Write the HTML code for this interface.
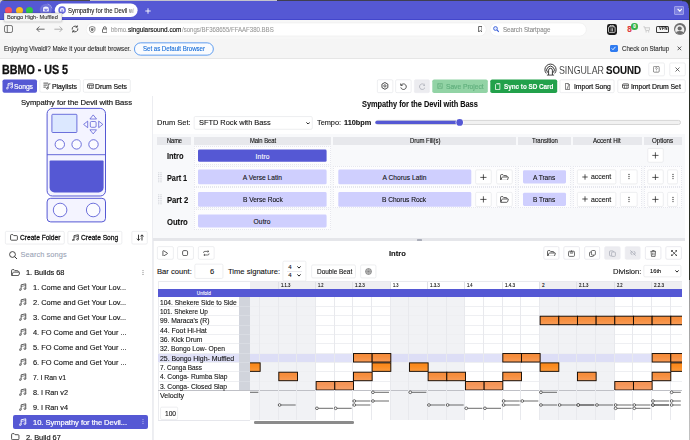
<!DOCTYPE html>
<html lang="en">
<head>
<meta charset="utf-8">
<title>Sympathy for the Devil with Bass</title>
<style>
html,body{margin:0;padding:0;}
body{width:690px;height:440px;overflow:hidden;position:relative;background:#fff;font-family:"Liberation Sans", sans-serif;}
.b{position:absolute;box-sizing:border-box;display:block;}
.t{position:absolute;white-space:pre;margin:0;padding:0;-webkit-text-stroke:0.1px;}

</style>
</head>
<body>
<header aria-label="App header">
<span class="t" style="left:2.20px;top:63.46px;font-size:11.9px;line-height:14.88px;letter-spacing:-0.040px;color:#111;font-weight:700;transform:scaleX(0.9048);transform-origin:0 50%;-webkit-text-stroke:0.3px #111;">BBMO - US 5</span>
<svg class="b" style="left:1px;top:78px" width="37" height="16"><rect x="1.50" y="1.40" width="34.50" height="13.30" rx="1.8" fill="#5558d4"/></svg>
<svg class="b" style="left:6.20px;top:82.20px;" width="7.2" height="7.65" viewBox="0 0 6.4 6.8"><path d="M1.8 5.5V1.5L5.7 0.7V4.7" fill="none" stroke="#fff" stroke-width="0.75" stroke-linejoin="round"/><path d="M1.8 2.9L5.7 2.1" fill="none" stroke="#fff" stroke-width="0.55"/><ellipse cx="1.05" cy="5.6" rx="0.8" ry="0.7" fill="none" stroke="#fff" stroke-width="0.65"/><ellipse cx="4.95" cy="4.8" rx="0.8" ry="0.7" fill="none" stroke="#fff" stroke-width="0.65"/></svg>
<span class="t" style="left:14.40px;top:81.65px;font-size:7.6px;line-height:9.5px;letter-spacing:-0.040px;color:#fff;transform:scaleX(0.8884);transform-origin:0 50%;-webkit-text-stroke:0.2px #fff;">Songs</span>
<svg class="b" style="left:38px;top:78px" width="44" height="16"><rect x="1.85" y="1.65" width="40.40" height="12.60" rx="1.25" fill="#fff" stroke="#e5e6ea" stroke-width="0.7"/></svg>
<svg class="b" style="left:43.20px;top:82.40px;" width="7.8" height="7.8" viewBox="0 0 7 7"><path d="M0.4 1H4.6M0.4 2.8H3.6M0.4 4.6H2.6" stroke="#2a2a2a" stroke-width="0.7"/><path d="M4.6 5.6V2L6.6 1.6" fill="none" stroke="#2a2a2a" stroke-width="0.7"/><ellipse cx="3.9" cy="5.7" rx="0.8" ry="0.7" fill="none" stroke="#2a2a2a" stroke-width="0.6"/></svg>
<span class="t" style="left:51.60px;top:81.65px;font-size:7.6px;line-height:9.5px;letter-spacing:-0.040px;color:#111;transform:scaleX(0.9078);transform-origin:0 50%;-webkit-text-stroke:0.2px #111;">Playlists</span>
<svg class="b" style="left:82px;top:78px" width="50" height="16"><rect x="1.35" y="1.65" width="46.90" height="12.60" rx="1.25" fill="#fff" stroke="#e5e6ea" stroke-width="0.7"/></svg>
<svg class="b" style="left:86.80px;top:83.20px;" width="7.4" height="6.2" viewBox="0 0 7.4 6.2"><rect x="0.5" y="0.9" width="6.4" height="4.4" rx="1.1" fill="none" stroke="#2a2a2a" stroke-width="0.75"/><path d="M0.5 2.4H6.9M2.5 2.4V5.3M4.9 2.4V5.3" stroke="#2a2a2a" stroke-width="0.6"/></svg>
<span class="t" style="left:94.60px;top:81.65px;font-size:7.6px;line-height:9.5px;letter-spacing:-0.040px;color:#111;transform:scaleX(0.9000);transform-origin:0 50%;-webkit-text-stroke:0.2px #111;">Drum Sets</span>
<svg class="b" style="left:543.60px;top:63.20px;" width="13" height="13" viewBox="0 0 13 13"><path d="M2.3 10.4A5.6 5.6 0 1 1 10.7 10.4" fill="none" stroke="#222" stroke-width="0.9"/><path d="M3.7 9.6A3.8 3.8 0 1 1 9.3 9.6" fill="none" stroke="#222" stroke-width="0.9"/><path d="M4.6 12V7.2A1.9 1.9 0 0 1 8.4 7.2V12" fill="none" stroke="#222" stroke-width="0.9"/><path d="M2.9 12.1H10.1" stroke="#222" stroke-width="0.8"/></svg>
<span class="t" style="left:558.60px;top:65.03px;font-size:10.2px;line-height:12.75px;letter-spacing:-0.040px;color:#262626;transform:scaleX(0.8685);transform-origin:0 50%;-webkit-text-stroke:0.12px #fff;">SINGULAR</span>
<span class="t" style="left:606.40px;top:64.10px;font-size:10.4px;line-height:13.0px;letter-spacing:-0.040px;color:#111;font-weight:700;transform:scaleX(0.9365);transform-origin:0 50%;">SOUND</span>
<svg class="b" style="left:647px;top:61px" width="19" height="17"><rect x="1.75" y="1.95" width="15.70" height="12.90" rx="1.25" fill="#fff" stroke="#e5e6ea" stroke-width="0.7"/></svg>
<svg class="b" style="left:653.40px;top:66.20px;" width="6.6" height="6.6" viewBox="0 0 6.6 6.6"><rect x="0.4" y="0.4" width="5.8" height="5.8" rx="1" fill="none" stroke="#444" stroke-width="0.6"/><path d="M2.4 2.5a0.9 0.9 0 1 1 1.3 0.8c-0.3 0.2-0.4 0.3-0.4 0.7" fill="none" stroke="#444" stroke-width="0.6"/><circle cx="3.3" cy="4.9" r="0.35" fill="#444"/></svg>
<svg class="b" style="left:668px;top:61px" width="19" height="17"><rect x="1.75" y="1.95" width="15.50" height="12.90" rx="1.25" fill="#fff" stroke="#e5e6ea" stroke-width="0.7"/></svg>
<svg class="b" style="left:675.00px;top:67.00px;" width="5" height="5" viewBox="0 0 5 5"><path d="M0.5 0.5L4.5 4.5M4.5 0.5L0.5 4.5" stroke="#333" stroke-width="0.7"/></svg>
<svg class="b" style="left:376px;top:78px" width="19" height="16"><rect x="1.35" y="1.75" width="15.50" height="12.90" rx="1.25" fill="#fff" stroke="#e5e6ea" stroke-width="0.7"/></svg>
<svg class="b" style="left:381.20px;top:82.40px;" width="7.8" height="7.8" viewBox="0 0 7.8 7.8"><path d="M3.9 0.5L6.85 2.2V5.6L3.9 7.3L0.95 5.6V2.2Z" fill="none" stroke="#222" stroke-width="0.8" stroke-linejoin="round"/><circle cx="3.9" cy="3.9" r="1.15" fill="none" stroke="#222" stroke-width="0.7"/></svg>
<svg class="b" style="left:394px;top:78px" width="19" height="16"><rect x="1.65" y="1.75" width="15.50" height="12.90" rx="1.25" fill="#fff" stroke="#e5e6ea" stroke-width="0.7"/></svg>
<svg class="b" style="left:400.00px;top:83.00px;" width="6.8" height="6.8" viewBox="0 0 6.8 6.8"><path d="M1.2 2.1A2.8 2.8 0 1 1 0.8 4.4" fill="none" stroke="#222" stroke-width="0.75"/><path d="M0.7 0.5V2.4H2.6" fill="none" stroke="#222" stroke-width="0.75"/></svg>
<svg class="b" style="left:413px;top:78px" width="18" height="16"><rect x="1.35" y="1.75" width="15.10" height="12.90" rx="1.25" fill="#ececf0" stroke="#ececf0" stroke-width="0.7"/></svg>
<svg class="b" style="left:418.50px;top:83.00px;" width="6.8" height="6.8" viewBox="0 0 6.8 6.8"><path d="M5.6 2.1A2.8 2.8 0 1 0 6 4.4" fill="none" stroke="#a8aab4" stroke-width="0.75"/><path d="M6.1 0.5V2.4H4.2" fill="none" stroke="#a8aab4" stroke-width="0.75"/></svg>
<svg class="b" style="left:431px;top:78px" width="58" height="16"><rect x="1.30" y="1.40" width="55.50" height="13.60" rx="1.8" fill="#92d3a5"/></svg>
<svg class="b" style="left:436.80px;top:83.40px;" width="6" height="6" viewBox="0 0 6 6"><rect x="0.4" y="0.4" width="5.2" height="5.2" rx="0.8" fill="none" stroke="#66b07f" stroke-width="0.65"/><path d="M1.6 0.4V2.2H4V0.4M1.6 5.6V3.6H4.4V5.6" fill="none" stroke="#66b07f" stroke-width="0.6"/></svg>
<span class="t" style="left:446.00px;top:81.97px;font-size:7.4px;line-height:9.25px;letter-spacing:-0.040px;color:#62b07e;transform:scaleX(0.9068);transform-origin:0 50%;-webkit-text-stroke:0.2px #62b07e;">Save Project</span>
<svg class="b" style="left:489px;top:78px" width="70" height="16"><rect x="1.30" y="1.40" width="66.90" height="13.60" rx="1.8" fill="#22a14b"/></svg>
<svg class="b" style="left:495.40px;top:83.10px;" width="5.4" height="7.0" viewBox="0 0 4.8 6.4"><path d="M1.5 0.4H4.4V6H0.4V1.5Z" fill="none" stroke="#fff" stroke-width="0.7"/><path d="M2 0.6V1.8M3 0.6V1.8" stroke="#fff" stroke-width="0.4"/></svg>
<span class="t" style="left:504.00px;top:81.97px;font-size:7.4px;line-height:9.25px;letter-spacing:-0.040px;color:#fff;font-weight:700;transform:scaleX(0.8614);transform-origin:0 50%;">Sync to SD Card</span>
<svg class="b" style="left:558px;top:78px" width="58" height="16"><rect x="1.95" y="1.75" width="54.10" height="12.90" rx="1.25" fill="#fff" stroke="#e5e6ea" stroke-width="0.7"/></svg>
<svg class="b" style="left:564.80px;top:83.00px;" width="5.2" height="6.8" viewBox="0 0 5.2 6.8"><path d="M0.4 0.4H3.2L4.8 2V6.4H0.4Z" fill="none" stroke="#333" stroke-width="0.65"/><path d="M3.2 0.4V2H4.8" fill="none" stroke="#333" stroke-width="0.5"/><path d="M2.9 5V3L4 2.8" fill="none" stroke="#333" stroke-width="0.5"/><circle cx="2.4" cy="5" r="0.55" fill="#333"/></svg>
<span class="t" style="left:574.00px;top:81.97px;font-size:7.4px;line-height:9.25px;letter-spacing:-0.040px;color:#111;transform:scaleX(0.9231);transform-origin:0 50%;-webkit-text-stroke:0.2px #111;">Import Song</span>
<svg class="b" style="left:616px;top:78px" width="71" height="16"><rect x="1.75" y="1.75" width="67.50" height="12.90" rx="1.25" fill="#fff" stroke="#e5e6ea" stroke-width="0.7"/></svg>
<svg class="b" style="left:621.60px;top:83.30px;" width="7.4" height="6.2" viewBox="0 0 7.4 6.2"><rect x="0.5" y="0.9" width="6.4" height="4.4" rx="1.1" fill="none" stroke="#2a2a2a" stroke-width="0.75"/><path d="M0.5 2.4H6.9M2.5 2.4V5.3M4.9 2.4V5.3" stroke="#2a2a2a" stroke-width="0.6"/></svg>
<span class="t" style="left:631.40px;top:81.97px;font-size:7.4px;line-height:9.25px;letter-spacing:-0.040px;color:#111;transform:scaleX(0.9281);transform-origin:0 50%;-webkit-text-stroke:0.2px #111;">Import Drum Set</span>
</header>
<aside aria-label="Song library">
<div class="b" style="left:151.80px;top:96.00px;width:0.70px;height:344.00px;background:#ecedf1;"></div>
<span class="t" style="left:21.20px;top:98.29px;font-size:7.7px;line-height:9.62px;letter-spacing:-0.040px;color:#111;transform:scaleX(0.9988);transform-origin:0 50%;-webkit-text-stroke:0.16px #111;">Sympathy for the Devil with Bass</span>
<svg class="b" style="left:45.00px;top:106.00px;" width="64" height="118" viewBox="45 106 64 118"><rect x="47.1" y="108.4" width="58.4" height="87.6" rx="5.2" fill="#f4f4ff" stroke="#5558d4" stroke-width="1"/><path d="M47.1 154.7H105.5" stroke="#5558d4" stroke-width="0.9"/><rect x="51.9" y="114.3" width="25" height="18.2" rx="0.8" fill="#dce8ff" stroke="#5558d4" stroke-width="0.85"/><path d="M93.2 114.9L96.5 119H89.9Z M93.2 133.9L96.5 129.8H89.9Z M83.6 124.4L87.7 121.1V127.7Z M102.8 124.4L98.7 121.1V127.7Z" fill="#f4f4ff" stroke="#5558d4" stroke-width="0.75" stroke-linejoin="round"/><rect x="90.3" y="121.5" width="5.8" height="5.8" rx="1.2" fill="#f4f4ff" stroke="#5558d4" stroke-width="0.75"/><circle cx="59.8" cy="144.4" r="4.7" fill="#fbfbff" stroke="#5558d4" stroke-width="0.85"/><circle cx="76.6" cy="144.4" r="4.7" fill="#fbfbff" stroke="#5558d4" stroke-width="0.85"/><circle cx="93.5" cy="144.4" r="4.7" fill="#fbfbff" stroke="#5558d4" stroke-width="0.85"/><path d="M49.6 161.6a1 1 0 0 1 1-1H102.6a1 1 0 0 1 1 1V187.4a5 5 0 0 1-5 5H54.6a5 5 0 0 1-5-5Z" fill="#5558d4"/><rect x="47.1" y="198.3" width="58.4" height="23.6" rx="3.6" fill="#f4f4ff" stroke="#5558d4" stroke-width="1"/><circle cx="60.1" cy="210" r="6.8" fill="#fbfbff" stroke="#5558d4" stroke-width="0.85"/><circle cx="93.2" cy="210" r="6.8" fill="#fbfbff" stroke="#5558d4" stroke-width="0.85"/></svg>
<svg class="b" style="left:4px;top:230px" width="62" height="16"><rect x="1.35" y="1.35" width="58.90" height="12.70" rx="1.25" fill="#fff" stroke="#e5e6ea" stroke-width="0.7"/></svg>
<svg class="b" style="left:9.80px;top:234.20px;" width="8" height="6.8" viewBox="0 0 8 6.8"><path d="M0.55 1.4Q0.55 0.6 1.35 0.6H2.9L3.8 1.6H6.6Q7.4 1.6 7.4 2.4V5.4Q7.4 6.2 6.6 6.2H1.35Q0.55 6.2 0.55 5.4Z" fill="none" stroke="#2a2a2a" stroke-width="0.8" stroke-linejoin="round"/></svg>
<span class="t" style="left:20.20px;top:233.38px;font-size:7.4px;line-height:9.25px;letter-spacing:-0.040px;color:#111;transform:scaleX(0.9037);transform-origin:0 50%;-webkit-text-stroke:0.28px #111;">Create Folder</span>
<svg class="b" style="left:66px;top:230px" width="58" height="16"><rect x="1.85" y="1.35" width="54.00" height="12.70" rx="1.25" fill="#fff" stroke="#e5e6ea" stroke-width="0.7"/></svg>
<svg class="b" style="left:72.00px;top:233.80px;" width="7.1" height="7.55" viewBox="0 0 6.4 6.8"><path d="M1.8 5.5V1.5L5.7 0.7V4.7" fill="none" stroke="#2a2a2a" stroke-width="0.75" stroke-linejoin="round"/><path d="M1.8 2.9L5.7 2.1" fill="none" stroke="#2a2a2a" stroke-width="0.55"/><ellipse cx="1.05" cy="5.6" rx="0.8" ry="0.7" fill="none" stroke="#2a2a2a" stroke-width="0.65"/><ellipse cx="4.95" cy="4.8" rx="0.8" ry="0.7" fill="none" stroke="#2a2a2a" stroke-width="0.65"/></svg>
<span class="t" style="left:81.00px;top:233.38px;font-size:7.4px;line-height:9.25px;letter-spacing:-0.040px;color:#111;transform:scaleX(0.9051);transform-origin:0 50%;-webkit-text-stroke:0.28px #111;">Create Song</span>
<svg class="b" style="left:130px;top:230px" width="19" height="16"><rect x="1.85" y="1.35" width="15.40" height="12.70" rx="1.25" fill="#fff" stroke="#e5e6ea" stroke-width="0.7"/></svg>
<svg class="b" style="left:136.00px;top:234.10px;" width="8.4" height="7.2" viewBox="0 0 8.4 7.2"><path d="M2.5 0.7V6.2M0.9 4.7L2.5 6.4L4.1 4.7" fill="none" stroke="#222" stroke-width="0.9"/><path d="M6 6.5V1M4.4 2.5L6 0.8L7.6 2.5" fill="none" stroke="#222" stroke-width="0.9"/></svg>
<svg class="b" style="left:8.60px;top:250.60px;" width="8.6" height="8.6" viewBox="0 0 8.6 8.6"><circle cx="3.5" cy="3.5" r="2.9" fill="none" stroke="#333" stroke-width="0.9"/><path d="M5.6 5.6L8 8" stroke="#333" stroke-width="1"/></svg>
<span class="t" style="left:20.60px;top:250.47px;font-size:7.4px;line-height:9.25px;letter-spacing:0.072px;color:#9aa3b5;">Search songs</span>
<svg class="b" style="left:10.80px;top:268.90px;" width="9.2" height="7.1" viewBox="0 0 8.8 6.8"><path d="M0.8 6.3Q0.55 6.3 0.55 5.6V1.4Q0.55 0.6 1.35 0.6H2.9L3.8 1.6H6.2Q7 1.6 7 2.4V3" fill="none" stroke="#333" stroke-width="0.8" stroke-linejoin="round"/><path d="M0.8 6.3L1.9 3.5Q2.1 3 2.7 3H7.9Q8.6 3 8.35 3.6L7.5 5.8Q7.3 6.3 6.7 6.3Z" fill="none" stroke="#333" stroke-width="0.8" stroke-linejoin="round"/></svg>
<span class="t" style="left:26.00px;top:267.76px;font-size:7.9px;line-height:9.88px;letter-spacing:-0.040px;color:#111;transform:scaleX(0.9413);transform-origin:0 50%;-webkit-text-stroke:0.16px #111;">1. Builds 68</span>
<svg class="b" style="left:142.00px;top:268.90px;" width="2" height="7" viewBox="0 0 2 7"><circle cx="1" cy="1.6" r="0.6" fill="#888"/><circle cx="1" cy="3.5" r="0.6" fill="#888"/><circle cx="1" cy="5.4" r="0.6" fill="#888"/></svg>
<svg class="b" style="left:19.30px;top:283.25px;" width="7.6" height="8.1" viewBox="0 0 6.4 6.8"><path d="M1.8 5.5V1.5L5.7 0.7V4.7" fill="none" stroke="#4a4a4a" stroke-width="0.75" stroke-linejoin="round"/><path d="M1.8 2.9L5.7 2.1" fill="none" stroke="#4a4a4a" stroke-width="0.55"/><ellipse cx="1.05" cy="5.6" rx="0.8" ry="0.7" fill="none" stroke="#4a4a4a" stroke-width="0.65"/><ellipse cx="4.95" cy="4.8" rx="0.8" ry="0.7" fill="none" stroke="#4a4a4a" stroke-width="0.65"/></svg>
<span class="t" style="left:32.60px;top:282.84px;font-size:7.7px;line-height:9.62px;letter-spacing:-0.040px;color:#111;transform:scaleX(0.9749);transform-origin:0 50%;-webkit-text-stroke:0.12px #111;">1. Come and Get Your Lov...</span>
<svg class="b" style="left:19.30px;top:298.22px;" width="7.6" height="8.1" viewBox="0 0 6.4 6.8"><path d="M1.8 5.5V1.5L5.7 0.7V4.7" fill="none" stroke="#4a4a4a" stroke-width="0.75" stroke-linejoin="round"/><path d="M1.8 2.9L5.7 2.1" fill="none" stroke="#4a4a4a" stroke-width="0.55"/><ellipse cx="1.05" cy="5.6" rx="0.8" ry="0.7" fill="none" stroke="#4a4a4a" stroke-width="0.65"/><ellipse cx="4.95" cy="4.8" rx="0.8" ry="0.7" fill="none" stroke="#4a4a4a" stroke-width="0.65"/></svg>
<span class="t" style="left:32.60px;top:297.81px;font-size:7.7px;line-height:9.62px;letter-spacing:-0.040px;color:#111;transform:scaleX(0.9770);transform-origin:0 50%;-webkit-text-stroke:0.12px #111;">2. Come and Get Your Lov...</span>
<svg class="b" style="left:19.30px;top:313.19px;" width="7.6" height="8.1" viewBox="0 0 6.4 6.8"><path d="M1.8 5.5V1.5L5.7 0.7V4.7" fill="none" stroke="#4a4a4a" stroke-width="0.75" stroke-linejoin="round"/><path d="M1.8 2.9L5.7 2.1" fill="none" stroke="#4a4a4a" stroke-width="0.55"/><ellipse cx="1.05" cy="5.6" rx="0.8" ry="0.7" fill="none" stroke="#4a4a4a" stroke-width="0.65"/><ellipse cx="4.95" cy="4.8" rx="0.8" ry="0.7" fill="none" stroke="#4a4a4a" stroke-width="0.65"/></svg>
<span class="t" style="left:32.60px;top:312.78px;font-size:7.7px;line-height:9.62px;letter-spacing:-0.040px;color:#111;transform:scaleX(0.9770);transform-origin:0 50%;-webkit-text-stroke:0.12px #111;">3. Come and Get Your Lov...</span>
<svg class="b" style="left:19.30px;top:328.16px;" width="7.6" height="8.1" viewBox="0 0 6.4 6.8"><path d="M1.8 5.5V1.5L5.7 0.7V4.7" fill="none" stroke="#4a4a4a" stroke-width="0.75" stroke-linejoin="round"/><path d="M1.8 2.9L5.7 2.1" fill="none" stroke="#4a4a4a" stroke-width="0.55"/><ellipse cx="1.05" cy="5.6" rx="0.8" ry="0.7" fill="none" stroke="#4a4a4a" stroke-width="0.65"/><ellipse cx="4.95" cy="4.8" rx="0.8" ry="0.7" fill="none" stroke="#4a4a4a" stroke-width="0.65"/></svg>
<span class="t" style="left:32.60px;top:327.75px;font-size:7.7px;line-height:9.62px;letter-spacing:-0.040px;color:#111;transform:scaleX(0.9710);transform-origin:0 50%;-webkit-text-stroke:0.12px #111;">4. FO Come and Get Your ...</span>
<svg class="b" style="left:19.30px;top:343.13px;" width="7.6" height="8.1" viewBox="0 0 6.4 6.8"><path d="M1.8 5.5V1.5L5.7 0.7V4.7" fill="none" stroke="#4a4a4a" stroke-width="0.75" stroke-linejoin="round"/><path d="M1.8 2.9L5.7 2.1" fill="none" stroke="#4a4a4a" stroke-width="0.55"/><ellipse cx="1.05" cy="5.6" rx="0.8" ry="0.7" fill="none" stroke="#4a4a4a" stroke-width="0.65"/><ellipse cx="4.95" cy="4.8" rx="0.8" ry="0.7" fill="none" stroke="#4a4a4a" stroke-width="0.65"/></svg>
<span class="t" style="left:32.60px;top:342.72px;font-size:7.7px;line-height:9.62px;letter-spacing:-0.040px;color:#111;transform:scaleX(0.9710);transform-origin:0 50%;-webkit-text-stroke:0.12px #111;">5. FO Come and Get Your ...</span>
<svg class="b" style="left:19.30px;top:358.10px;" width="7.6" height="8.1" viewBox="0 0 6.4 6.8"><path d="M1.8 5.5V1.5L5.7 0.7V4.7" fill="none" stroke="#4a4a4a" stroke-width="0.75" stroke-linejoin="round"/><path d="M1.8 2.9L5.7 2.1" fill="none" stroke="#4a4a4a" stroke-width="0.55"/><ellipse cx="1.05" cy="5.6" rx="0.8" ry="0.7" fill="none" stroke="#4a4a4a" stroke-width="0.65"/><ellipse cx="4.95" cy="4.8" rx="0.8" ry="0.7" fill="none" stroke="#4a4a4a" stroke-width="0.65"/></svg>
<span class="t" style="left:32.60px;top:357.69px;font-size:7.7px;line-height:9.62px;letter-spacing:-0.040px;color:#111;transform:scaleX(0.9710);transform-origin:0 50%;-webkit-text-stroke:0.12px #111;">6. FO Come and Get Your ...</span>
<svg class="b" style="left:19.30px;top:373.07px;" width="7.6" height="8.1" viewBox="0 0 6.4 6.8"><path d="M1.8 5.5V1.5L5.7 0.7V4.7" fill="none" stroke="#4a4a4a" stroke-width="0.75" stroke-linejoin="round"/><path d="M1.8 2.9L5.7 2.1" fill="none" stroke="#4a4a4a" stroke-width="0.55"/><ellipse cx="1.05" cy="5.6" rx="0.8" ry="0.7" fill="none" stroke="#4a4a4a" stroke-width="0.65"/><ellipse cx="4.95" cy="4.8" rx="0.8" ry="0.7" fill="none" stroke="#4a4a4a" stroke-width="0.65"/></svg>
<span class="t" style="left:32.60px;top:372.66px;font-size:7.7px;line-height:9.62px;letter-spacing:-0.040px;color:#111;transform:scaleX(0.8970);transform-origin:0 50%;-webkit-text-stroke:0.12px #111;">7. I Ran v1</span>
<svg class="b" style="left:19.30px;top:388.04px;" width="7.6" height="8.1" viewBox="0 0 6.4 6.8"><path d="M1.8 5.5V1.5L5.7 0.7V4.7" fill="none" stroke="#4a4a4a" stroke-width="0.75" stroke-linejoin="round"/><path d="M1.8 2.9L5.7 2.1" fill="none" stroke="#4a4a4a" stroke-width="0.55"/><ellipse cx="1.05" cy="5.6" rx="0.8" ry="0.7" fill="none" stroke="#4a4a4a" stroke-width="0.65"/><ellipse cx="4.95" cy="4.8" rx="0.8" ry="0.7" fill="none" stroke="#4a4a4a" stroke-width="0.65"/></svg>
<span class="t" style="left:32.60px;top:387.63px;font-size:7.7px;line-height:9.62px;letter-spacing:-0.040px;color:#111;transform:scaleX(0.9514);transform-origin:0 50%;-webkit-text-stroke:0.12px #111;">8. I Ran v2</span>
<svg class="b" style="left:19.30px;top:403.01px;" width="7.6" height="8.1" viewBox="0 0 6.4 6.8"><path d="M1.8 5.5V1.5L5.7 0.7V4.7" fill="none" stroke="#4a4a4a" stroke-width="0.75" stroke-linejoin="round"/><path d="M1.8 2.9L5.7 2.1" fill="none" stroke="#4a4a4a" stroke-width="0.55"/><ellipse cx="1.05" cy="5.6" rx="0.8" ry="0.7" fill="none" stroke="#4a4a4a" stroke-width="0.65"/><ellipse cx="4.95" cy="4.8" rx="0.8" ry="0.7" fill="none" stroke="#4a4a4a" stroke-width="0.65"/></svg>
<span class="t" style="left:32.60px;top:402.60px;font-size:7.7px;line-height:9.62px;letter-spacing:-0.040px;color:#111;transform:scaleX(0.9514);transform-origin:0 50%;-webkit-text-stroke:0.12px #111;">9. I Ran v4</span>
<div class="b" style="left:13.00px;top:414.58px;width:134.60px;height:14.60px;background:#5558d4;border-radius:2px;"></div>
<svg class="b" style="left:142.00px;top:418.38px;" width="2" height="7" viewBox="0 0 2 7"><circle cx="1" cy="1.6" r="0.6" fill="#b4b6ee"/><circle cx="1" cy="3.5" r="0.6" fill="#b4b6ee"/><circle cx="1" cy="5.4" r="0.6" fill="#b4b6ee"/></svg>
<svg class="b" style="left:19.30px;top:417.98px;" width="7.6" height="8.1" viewBox="0 0 6.4 6.8"><path d="M1.8 5.5V1.5L5.7 0.7V4.7" fill="none" stroke="#fff" stroke-width="0.75" stroke-linejoin="round"/><path d="M1.8 2.9L5.7 2.1" fill="none" stroke="#fff" stroke-width="0.55"/><ellipse cx="1.05" cy="5.6" rx="0.8" ry="0.7" fill="none" stroke="#fff" stroke-width="0.65"/><ellipse cx="4.95" cy="4.8" rx="0.8" ry="0.7" fill="none" stroke="#fff" stroke-width="0.65"/></svg>
<span class="t" style="left:32.60px;top:417.57px;font-size:7.7px;line-height:9.62px;letter-spacing:-0.040px;color:#fff;transform:scaleX(0.9847);transform-origin:0 50%;-webkit-text-stroke:0.2px #fff;">10. Sympathy for the Devil...</span>
<svg class="b" style="left:11.00px;top:433.40px;" width="8.6" height="7.3" viewBox="0 0 8 6.8"><path d="M0.55 1.4Q0.55 0.6 1.35 0.6H2.9L3.8 1.6H6.6Q7.4 1.6 7.4 2.4V5.4Q7.4 6.2 6.6 6.2H1.35Q0.55 6.2 0.55 5.4Z" fill="none" stroke="#333" stroke-width="0.8" stroke-linejoin="round"/></svg>
<span class="t" style="left:26.00px;top:432.66px;font-size:7.9px;line-height:9.88px;letter-spacing:-0.040px;color:#111;transform:scaleX(0.9432);transform-origin:0 50%;-webkit-text-stroke:0.16px #111;">2. Build 67</span>
</aside>
<section aria-label="Song parts">
<span class="t" style="left:361.60px;top:99.31px;font-size:8.3px;line-height:10.38px;letter-spacing:-0.040px;color:#111;font-weight:700;transform:scaleX(0.8927);transform-origin:0 50%;">Sympathy for the Devil with Bass</span>
<span class="t" style="left:157.00px;top:118.45px;font-size:7.6px;line-height:9.5px;letter-spacing:-0.040px;color:#111;transform:scaleX(0.9921);transform-origin:0 50%;">Drum Set:</span>
<svg class="b" style="left:192px;top:115px" width="122" height="16"><rect x="2.15" y="1.55" width="118.10" height="12.70" rx="1.25" fill="#fff" stroke="#e5e6ea" stroke-width="0.7"/></svg>
<span class="t" style="left:199.30px;top:118.45px;font-size:7.6px;line-height:9.5px;letter-spacing:-0.040px;color:#111;transform:scaleX(0.9805);transform-origin:0 50%;">SFTD Rock with Bass</span>
<svg class="b" style="left:305.90px;top:121.60px;" width="4.2" height="2.6" viewBox="0 0 4.2 2.6"><path d="M0.4 0.4L2.1 2.1L3.8000000000000003 0.4" fill="none" stroke="#222" stroke-width="1"/></svg>
<span class="t" style="left:316.80px;top:118.45px;font-size:7.6px;line-height:9.5px;letter-spacing:-0.040px;color:#111;transform:scaleX(0.9714);transform-origin:0 50%;">Tempo:</span>
<span class="t" style="left:343.80px;top:118.45px;font-size:7.6px;line-height:9.5px;letter-spacing:-0.040px;color:#111;font-weight:700;transform:scaleX(0.9686);transform-origin:0 50%;">110bpm</span>
<svg class="b" style="left:374px;top:118px" width="308" height="8"><rect x="1.80" y="2.40" width="304.70" height="4.10" rx="2.00" fill="#f1f1f1" stroke="#d6d6d6" stroke-width="1"/></svg>
<svg class="b" style="left:374px;top:119px" width="87" height="7"><rect x="1.30" y="1.70" width="84.70" height="3.40" rx="1.7" fill="#5558d4"/></svg>
<svg class="b" style="left:454px;top:117px" width="11" height="11"><rect x="1.60" y="1.40" width="8.00" height="8.00" rx="4" fill="#fff"/></svg>
<svg class="b" style="left:455px;top:118px" width="9" height="9"><rect x="1.30" y="1.10" width="6.70" height="6.70" rx="3.4" fill="#5558d4"/></svg>
<div class="b" style="left:153.20px;top:133.60px;width:531.40px;height:104.40px;background:#f8f9fb;"></div>
<div class="b" style="left:157.00px;top:137.40px;width:34.30px;height:7.20px;background:#e7e8ec;"></div>
<span class="t" style="left:166.80px;top:137.24px;font-size:6.5px;line-height:8.12px;letter-spacing:-0.040px;color:#111;transform:scaleX(0.8709);transform-origin:0 50%;-webkit-text-stroke:0.12px #111;">Name</span>
<div class="b" style="left:193.80px;top:137.40px;width:137.70px;height:7.20px;background:#e7e8ec;"></div>
<span class="t" style="left:249.50px;top:137.24px;font-size:6.5px;line-height:8.12px;letter-spacing:-0.040px;color:#111;transform:scaleX(0.9012);transform-origin:0 50%;-webkit-text-stroke:0.12px #111;">Main Beat</span>
<div class="b" style="left:333.30px;top:137.40px;width:182.90px;height:7.20px;background:#e7e8ec;"></div>
<span class="t" style="left:409.60px;top:137.24px;font-size:6.5px;line-height:8.12px;letter-spacing:-0.040px;color:#111;transform:scaleX(0.9174);transform-origin:0 50%;-webkit-text-stroke:0.12px #111;">Drum Fill(s)</span>
<div class="b" style="left:518.40px;top:137.40px;width:52.30px;height:7.20px;background:#e7e8ec;"></div>
<span class="t" style="left:531.80px;top:137.24px;font-size:6.5px;line-height:8.12px;letter-spacing:-0.040px;color:#111;transform:scaleX(0.9230);transform-origin:0 50%;-webkit-text-stroke:0.12px #111;">Transition</span>
<div class="b" style="left:573.00px;top:137.40px;width:68.70px;height:7.20px;background:#e7e8ec;"></div>
<span class="t" style="left:593.40px;top:137.24px;font-size:6.5px;line-height:8.12px;letter-spacing:-0.040px;color:#111;transform:scaleX(0.9431);transform-origin:0 50%;-webkit-text-stroke:0.12px #111;">Accent Hit</span>
<div class="b" style="left:644.00px;top:137.40px;width:37.50px;height:7.20px;background:#e7e8ec;"></div>
<span class="t" style="left:652.00px;top:137.24px;font-size:6.5px;line-height:8.12px;letter-spacing:-0.040px;color:#111;transform:scaleX(0.9474);transform-origin:0 50%;-webkit-text-stroke:0.12px #111;">Options</span>
<div class="b" style="left:193.80px;top:145.70px;width:137.70px;height:19.50px;background:#fdfdfe;border:0.6px dotted #e6e7ee;"></div>
<span class="t" style="left:166.80px;top:151.40px;font-size:8.4px;line-height:10.5px;letter-spacing:-0.040px;color:#111;font-weight:700;transform:scaleX(0.8943);transform-origin:0 50%;">Intro</span>
<svg class="b" style="left:197px;top:148px" width="131" height="15"><rect x="1.00" y="1.50" width="128.60" height="12.30" rx="1.4" fill="#5558d4"/></svg>
<span class="t" style="left:255.60px;top:152.56px;font-size:6.7px;line-height:8.38px;letter-spacing:0.152px;color:#fff;-webkit-text-stroke:0.1px #fff;">Intro</span>
<svg class="b" style="left:646px;top:147px" width="19" height="17"><rect x="1.75" y="1.45" width="15.50" height="13.80" rx="1.25" fill="#fff" stroke="#e5e6ea" stroke-width="0.7"/></svg>
<svg class="b" style="left:652.10px;top:152.00px;" width="6.8" height="6.8" viewBox="0 0 6.8 6.8"><path d="M3.4 0.3V6.5M0.3 3.4H6.5" stroke="#222" stroke-width="0.75"/></svg>
<div class="b" style="left:193.80px;top:165.60px;width:137.70px;height:21.20px;background:#fdfdfe;border:0.6px dotted #e6e7ee;"></div>
<div class="b" style="left:333.30px;top:165.60px;width:182.90px;height:21.20px;background:#fdfdfe;border:0.6px dotted #e6e7ee;"></div>
<div class="b" style="left:518.40px;top:165.60px;width:52.30px;height:21.20px;background:#fdfdfe;border:0.6px dotted #e6e7ee;"></div>
<div class="b" style="left:573.00px;top:165.60px;width:68.70px;height:21.20px;background:#fdfdfe;border:0.6px dotted #e6e7ee;"></div>
<div class="b" style="left:644.00px;top:165.60px;width:37.50px;height:21.20px;background:#fdfdfe;border:0.6px dotted #e6e7ee;"></div>
<svg class="b" style="left:158.20px;top:171.50px;" width="4" height="11" viewBox="0 0 4 11"><circle cx="0.8" cy="0.8" r="0.55" fill="#c3c5cd"/><circle cx="0.8" cy="2.6" r="0.55" fill="#c3c5cd"/><circle cx="0.8" cy="4.4" r="0.55" fill="#c3c5cd"/><circle cx="0.8" cy="6.2" r="0.55" fill="#c3c5cd"/><circle cx="0.8" cy="8.0" r="0.55" fill="#c3c5cd"/><circle cx="0.8" cy="9.8" r="0.55" fill="#c3c5cd"/><circle cx="3" cy="0.8" r="0.55" fill="#c3c5cd"/><circle cx="3" cy="2.6" r="0.55" fill="#c3c5cd"/><circle cx="3" cy="4.4" r="0.55" fill="#c3c5cd"/><circle cx="3" cy="6.2" r="0.55" fill="#c3c5cd"/><circle cx="3" cy="8.0" r="0.55" fill="#c3c5cd"/><circle cx="3" cy="9.8" r="0.55" fill="#c3c5cd"/></svg>
<span class="t" style="left:166.80px;top:172.65px;font-size:8.4px;line-height:10.5px;letter-spacing:-0.040px;color:#111;font-weight:700;transform:scaleX(0.8752);transform-origin:0 50%;">Part 1</span>
<svg class="b" style="left:197px;top:168px" width="131" height="18"><rect x="1.00" y="1.50" width="128.60" height="14.80" rx="1.4" fill="#cfcffe"/></svg>
<span class="t" style="left:242.80px;top:173.81px;font-size:6.7px;line-height:8.38px;letter-spacing:-0.018px;color:#111;-webkit-text-stroke:0.1px #111;">A Verse Latin</span>
<svg class="b" style="left:337px;top:168px" width="136" height="18"><rect x="1.30" y="1.50" width="133.00" height="14.80" rx="1.4" fill="#cfcffe"/></svg>
<span class="t" style="left:382.40px;top:173.81px;font-size:6.7px;line-height:8.38px;letter-spacing:0.025px;color:#111;-webkit-text-stroke:0.1px #111;">A Chorus Latin</span>
<svg class="b" style="left:474px;top:168px" width="19" height="18"><rect x="1.65" y="1.85" width="15.60" height="14.10" rx="1.25" fill="#fff" stroke="#e5e6ea" stroke-width="0.7"/></svg>
<svg class="b" style="left:480.10px;top:173.50px;" width="6.8" height="6.8" viewBox="0 0 6.8 6.8"><path d="M3.4 0.3V6.5M0.3 3.4H6.5" stroke="#222" stroke-width="0.75"/></svg>
<svg class="b" style="left:495px;top:168px" width="19" height="18"><rect x="1.65" y="1.85" width="15.60" height="14.10" rx="1.25" fill="#fff" stroke="#e5e6ea" stroke-width="0.7"/></svg>
<svg class="b" style="left:500.20px;top:173.70px;" width="8.8" height="6.8" viewBox="0 0 8.8 6.8"><path d="M0.8 6.3Q0.55 6.3 0.55 5.6V1.4Q0.55 0.6 1.35 0.6H2.9L3.8 1.6H6.2Q7 1.6 7 2.4V3" fill="none" stroke="#333" stroke-width="0.8" stroke-linejoin="round"/><path d="M0.8 6.3L1.9 3.5Q2.1 3 2.7 3H7.9Q8.6 3 8.35 3.6L7.5 5.8Q7.3 6.3 6.7 6.3Z" fill="none" stroke="#333" stroke-width="0.8" stroke-linejoin="round"/></svg>
<svg class="b" style="left:522px;top:169px" width="45" height="16"><rect x="1.00" y="1.30" width="43.00" height="13.20" rx="1.4" fill="#cfcffe"/></svg>
<span class="t" style="left:533.40px;top:173.69px;font-size:6.9px;line-height:8.62px;letter-spacing:-0.040px;color:#111;transform:scaleX(0.9596);transform-origin:0 50%;-webkit-text-stroke:0.1px #111;">A Trans</span>
<svg class="b" style="left:576px;top:168px" width="42" height="18"><rect x="1.35" y="1.85" width="38.50" height="14.10" rx="1.25" fill="#fff" stroke="#e5e6ea" stroke-width="0.7"/></svg>
<svg class="b" style="left:582.00px;top:173.90px;" width="6" height="6" viewBox="0 0 6 6"><path d="M3.0 0.3V5.7M0.3 3.0H5.7" stroke="#222" stroke-width="0.75"/></svg>
<span class="t" style="left:591.20px;top:173.36px;font-size:7.1px;line-height:8.88px;letter-spacing:-0.040px;color:#111;transform:scaleX(0.9756);transform-origin:0 50%;-webkit-text-stroke:0.1px #111;">accent</span>
<svg class="b" style="left:619px;top:168px" width="20" height="18"><rect x="1.35" y="1.85" width="16.80" height="14.10" rx="1.25" fill="#fff" stroke="#e5e6ea" stroke-width="0.7"/></svg>
<svg class="b" style="left:627.70px;top:173.40px;" width="2" height="7" viewBox="0 0 2 7"><circle cx="1" cy="1.4" r="0.66" fill="#444"/><circle cx="1" cy="3.5" r="0.66" fill="#444"/><circle cx="1" cy="5.6" r="0.66" fill="#444"/></svg>
<svg class="b" style="left:646px;top:168px" width="19" height="18"><rect x="1.75" y="1.85" width="15.50" height="14.10" rx="1.25" fill="#fff" stroke="#e5e6ea" stroke-width="0.7"/></svg>
<svg class="b" style="left:652.10px;top:173.50px;" width="6.8" height="6.8" viewBox="0 0 6.8 6.8"><path d="M3.4 0.3V6.5M0.3 3.4H6.5" stroke="#222" stroke-width="0.75"/></svg>
<svg class="b" style="left:666px;top:168px" width="13" height="18"><rect x="1.65" y="1.85" width="9.80" height="14.10" rx="1.25" fill="#fff" stroke="#e5e6ea" stroke-width="0.7"/></svg>
<svg class="b" style="left:671.50px;top:173.00px;" width="2" height="7" viewBox="0 0 2 7"><circle cx="1" cy="1.4" r="0.66" fill="#444"/><circle cx="1" cy="3.5" r="0.66" fill="#444"/><circle cx="1" cy="5.6" r="0.66" fill="#444"/></svg>
<div class="b" style="left:193.80px;top:187.20px;width:137.70px;height:21.20px;background:#fdfdfe;border:0.6px dotted #e6e7ee;"></div>
<div class="b" style="left:333.30px;top:187.20px;width:182.90px;height:21.20px;background:#fdfdfe;border:0.6px dotted #e6e7ee;"></div>
<div class="b" style="left:518.40px;top:187.20px;width:52.30px;height:21.20px;background:#fdfdfe;border:0.6px dotted #e6e7ee;"></div>
<div class="b" style="left:573.00px;top:187.20px;width:68.70px;height:21.20px;background:#fdfdfe;border:0.6px dotted #e6e7ee;"></div>
<div class="b" style="left:644.00px;top:187.20px;width:37.50px;height:21.20px;background:#fdfdfe;border:0.6px dotted #e6e7ee;"></div>
<svg class="b" style="left:158.20px;top:194.00px;" width="4" height="11" viewBox="0 0 4 11"><circle cx="0.8" cy="0.8" r="0.55" fill="#c3c5cd"/><circle cx="0.8" cy="2.6" r="0.55" fill="#c3c5cd"/><circle cx="0.8" cy="4.4" r="0.55" fill="#c3c5cd"/><circle cx="0.8" cy="6.2" r="0.55" fill="#c3c5cd"/><circle cx="0.8" cy="8.0" r="0.55" fill="#c3c5cd"/><circle cx="0.8" cy="9.8" r="0.55" fill="#c3c5cd"/><circle cx="3" cy="0.8" r="0.55" fill="#c3c5cd"/><circle cx="3" cy="2.6" r="0.55" fill="#c3c5cd"/><circle cx="3" cy="4.4" r="0.55" fill="#c3c5cd"/><circle cx="3" cy="6.2" r="0.55" fill="#c3c5cd"/><circle cx="3" cy="8.0" r="0.55" fill="#c3c5cd"/><circle cx="3" cy="9.8" r="0.55" fill="#c3c5cd"/></svg>
<span class="t" style="left:166.80px;top:195.15px;font-size:8.4px;line-height:10.5px;letter-spacing:-0.040px;color:#111;font-weight:700;transform:scaleX(0.9185);transform-origin:0 50%;">Part 2</span>
<svg class="b" style="left:197px;top:191px" width="131" height="17"><rect x="1.00" y="1.00" width="128.60" height="14.80" rx="1.4" fill="#cfcffe"/></svg>
<span class="t" style="left:242.80px;top:196.31px;font-size:6.7px;line-height:8.38px;letter-spacing:-0.040px;color:#111;transform:scaleX(0.9906);transform-origin:0 50%;-webkit-text-stroke:0.1px #111;">B Verse Rock</span>
<svg class="b" style="left:337px;top:191px" width="136" height="17"><rect x="1.30" y="1.00" width="133.00" height="14.80" rx="1.4" fill="#cfcffe"/></svg>
<span class="t" style="left:382.40px;top:196.31px;font-size:6.7px;line-height:8.38px;letter-spacing:-0.040px;color:#111;transform:scaleX(0.9932);transform-origin:0 50%;-webkit-text-stroke:0.1px #111;">B Chorus Rock</span>
<svg class="b" style="left:474px;top:191px" width="19" height="17"><rect x="1.65" y="1.35" width="15.60" height="14.10" rx="1.25" fill="#fff" stroke="#e5e6ea" stroke-width="0.7"/></svg>
<svg class="b" style="left:480.10px;top:196.00px;" width="6.8" height="6.8" viewBox="0 0 6.8 6.8"><path d="M3.4 0.3V6.5M0.3 3.4H6.5" stroke="#222" stroke-width="0.75"/></svg>
<svg class="b" style="left:495px;top:191px" width="19" height="17"><rect x="1.65" y="1.35" width="15.60" height="14.10" rx="1.25" fill="#fff" stroke="#e5e6ea" stroke-width="0.7"/></svg>
<svg class="b" style="left:500.20px;top:196.20px;" width="8.8" height="6.8" viewBox="0 0 8.8 6.8"><path d="M0.8 6.3Q0.55 6.3 0.55 5.6V1.4Q0.55 0.6 1.35 0.6H2.9L3.8 1.6H6.2Q7 1.6 7 2.4V3" fill="none" stroke="#333" stroke-width="0.8" stroke-linejoin="round"/><path d="M0.8 6.3L1.9 3.5Q2.1 3 2.7 3H7.9Q8.6 3 8.35 3.6L7.5 5.8Q7.3 6.3 6.7 6.3Z" fill="none" stroke="#333" stroke-width="0.8" stroke-linejoin="round"/></svg>
<svg class="b" style="left:522px;top:191px" width="45" height="16"><rect x="1.00" y="1.80" width="43.00" height="13.20" rx="1.4" fill="#cfcffe"/></svg>
<span class="t" style="left:533.40px;top:196.19px;font-size:6.9px;line-height:8.62px;letter-spacing:-0.040px;color:#111;transform:scaleX(0.9443);transform-origin:0 50%;-webkit-text-stroke:0.1px #111;">B Trans</span>
<svg class="b" style="left:576px;top:191px" width="42" height="17"><rect x="1.35" y="1.35" width="38.50" height="14.10" rx="1.25" fill="#fff" stroke="#e5e6ea" stroke-width="0.7"/></svg>
<svg class="b" style="left:582.00px;top:196.40px;" width="6" height="6" viewBox="0 0 6 6"><path d="M3.0 0.3V5.7M0.3 3.0H5.7" stroke="#222" stroke-width="0.75"/></svg>
<span class="t" style="left:591.20px;top:195.86px;font-size:7.1px;line-height:8.88px;letter-spacing:-0.040px;color:#111;transform:scaleX(0.9756);transform-origin:0 50%;-webkit-text-stroke:0.1px #111;">accent</span>
<svg class="b" style="left:619px;top:191px" width="20" height="17"><rect x="1.35" y="1.35" width="16.80" height="14.10" rx="1.25" fill="#fff" stroke="#e5e6ea" stroke-width="0.7"/></svg>
<svg class="b" style="left:627.70px;top:195.90px;" width="2" height="7" viewBox="0 0 2 7"><circle cx="1" cy="1.4" r="0.66" fill="#444"/><circle cx="1" cy="3.5" r="0.66" fill="#444"/><circle cx="1" cy="5.6" r="0.66" fill="#444"/></svg>
<svg class="b" style="left:646px;top:191px" width="19" height="17"><rect x="1.75" y="1.35" width="15.50" height="14.10" rx="1.25" fill="#fff" stroke="#e5e6ea" stroke-width="0.7"/></svg>
<svg class="b" style="left:652.10px;top:196.00px;" width="6.8" height="6.8" viewBox="0 0 6.8 6.8"><path d="M3.4 0.3V6.5M0.3 3.4H6.5" stroke="#222" stroke-width="0.75"/></svg>
<svg class="b" style="left:666px;top:191px" width="13" height="17"><rect x="1.65" y="1.35" width="9.80" height="14.10" rx="1.25" fill="#fff" stroke="#e5e6ea" stroke-width="0.7"/></svg>
<svg class="b" style="left:671.50px;top:195.50px;" width="2" height="7" viewBox="0 0 2 7"><circle cx="1" cy="1.4" r="0.66" fill="#444"/><circle cx="1" cy="3.5" r="0.66" fill="#444"/><circle cx="1" cy="5.6" r="0.66" fill="#444"/></svg>
<div class="b" style="left:193.80px;top:208.90px;width:137.70px;height:20.90px;background:#fdfdfe;border:0.6px dotted #e6e7ee;"></div>
<span class="t" style="left:166.80px;top:216.75px;font-size:8.4px;line-height:10.5px;letter-spacing:-0.040px;color:#111;font-weight:700;transform:scaleX(0.9189);transform-origin:0 50%;">Outro</span>
<svg class="b" style="left:197px;top:213px" width="131" height="16"><rect x="1.00" y="1.50" width="128.60" height="13.00" rx="1.4" fill="#cfcffe"/></svg>
<span class="t" style="left:253.60px;top:217.91px;font-size:6.7px;line-height:8.38px;letter-spacing:0.066px;color:#111;-webkit-text-stroke:0.1px #111;">Outro</span>
<div class="b" style="left:153.20px;top:238.00px;width:531.40px;height:3.40px;background:#e5e6ea;"></div>
<div class="b" style="left:417.20px;top:239.20px;width:4.60px;height:1.40px;background:#a9acb8;border-radius:0.6px;"></div>
</section>
<section aria-label="Beat editor">
<div class="b" style="left:153.00px;top:241.40px;width:0.70px;height:198.60px;background:#eeeff2;"></div>
<svg class="b" style="left:156px;top:245px" width="19" height="16"><rect x="1.35" y="1.65" width="16.00" height="12.60" rx="1.25" fill="#fff" stroke="#e5e6ea" stroke-width="0.7"/></svg>
<svg class="b" style="left:162.00px;top:249.60px;" width="6.4" height="6.8" viewBox="0 0 6.4 6.8"><path d="M0.9 1.2Q0.9 0.5 1.6 0.8L5.3 3Q5.8 3.4 5.3 3.8L1.6 6Q0.9 6.3 0.9 5.6Z" fill="none" stroke="#3a3a3a" stroke-width="0.8" stroke-linejoin="round"/></svg>
<svg class="b" style="left:176px;top:245px" width="19" height="16"><rect x="1.55" y="1.65" width="15.90" height="12.60" rx="1.25" fill="#fff" stroke="#e5e6ea" stroke-width="0.7"/></svg>
<svg class="b" style="left:182.40px;top:249.90px;" width="6.2" height="6.2" viewBox="0 0 6.2 6.2"><rect x="0.6" y="0.6" width="5" height="5" rx="1.3" fill="none" stroke="#3a3a3a" stroke-width="0.8"/></svg>
<svg class="b" style="left:197px;top:245px" width="19" height="16"><rect x="1.35" y="1.65" width="15.80" height="12.60" rx="1.25" fill="#fff" stroke="#e5e6ea" stroke-width="0.7"/></svg>
<svg class="b" style="left:203.00px;top:249.90px;" width="6.6" height="6.4" viewBox="0 0 6.6 6.4"><path d="M0.6 3V2.6a1.2 1.2 0 0 1 1.2-1.2H5.6M4.6 0.3L5.8 1.4L4.6 2.5" fill="none" stroke="#333" stroke-width="0.7"/><path d="M6 3.4V3.8a1.2 1.2 0 0 1-1.2 1.2H1M2 3.9L0.8 5L2 6.1" fill="none" stroke="#333" stroke-width="0.7"/></svg>
<span class="t" style="left:389.00px;top:248.70px;font-size:8px;line-height:10.0px;letter-spacing:-0.040px;color:#111;font-weight:700;transform:scaleX(0.9534);transform-origin:0 50%;">Intro</span>
<svg class="b" style="left:542px;top:245px" width="19" height="16"><rect x="1.85" y="1.65" width="15.10" height="12.60" rx="1.25" fill="#fff" stroke="#e2e3e8" stroke-width="0.7"/></svg>
<svg class="b" style="left:562px;top:245px" width="19" height="16"><rect x="1.85" y="1.65" width="15.60" height="12.60" rx="1.25" fill="#fff" stroke="#e2e3e8" stroke-width="0.7"/></svg>
<svg class="b" style="left:583px;top:245px" width="18" height="16"><rect x="1.65" y="1.65" width="15.00" height="12.60" rx="1.25" fill="#fff" stroke="#e2e3e8" stroke-width="0.7"/></svg>
<svg class="b" style="left:603px;top:245px" width="19" height="16"><rect x="1.65" y="1.65" width="15.50" height="12.60" rx="1.25" fill="#ececf0" stroke="#ececf0" stroke-width="0.7"/></svg>
<svg class="b" style="left:623px;top:245px" width="19" height="16"><rect x="2.15" y="1.65" width="15.00" height="12.60" rx="1.25" fill="#ececf0" stroke="#ececf0" stroke-width="0.7"/></svg>
<svg class="b" style="left:644px;top:245px" width="19" height="16"><rect x="1.35" y="1.65" width="15.60" height="12.60" rx="1.25" fill="#fff" stroke="#e2e3e8" stroke-width="0.7"/></svg>
<svg class="b" style="left:664px;top:245px" width="19" height="16"><rect x="1.85" y="1.65" width="15.60" height="12.60" rx="1.25" fill="#fff" stroke="#e2e3e8" stroke-width="0.7"/></svg>
<svg class="b" style="left:547.20px;top:249.70px;" width="8.8" height="6.8" viewBox="0 0 8.8 6.8"><path d="M0.8 6.3Q0.55 6.3 0.55 5.6V1.4Q0.55 0.6 1.35 0.6H2.9L3.8 1.6H6.2Q7 1.6 7 2.4V3" fill="none" stroke="#333" stroke-width="0.8" stroke-linejoin="round"/><path d="M0.8 6.3L1.9 3.5Q2.1 3 2.7 3H7.9Q8.6 3 8.35 3.6L7.5 5.8Q7.3 6.3 6.7 6.3Z" fill="none" stroke="#333" stroke-width="0.8" stroke-linejoin="round"/></svg>
<svg class="b" style="left:568.20px;top:249.60px;" width="7" height="7" viewBox="0 0 7 7"><rect x="0.5" y="1.2" width="6" height="5.2" rx="1" fill="none" stroke="#333" stroke-width="0.7"/><path d="M2.2 1.2V3.2H4.8V1.2M3.5 0.2V2.4" fill="none" stroke="#333" stroke-width="0.6"/></svg>
<svg class="b" style="left:588.80px;top:249.60px;" width="7" height="7" viewBox="0 0 7 7"><rect x="2.4" y="0.5" width="4" height="4.6" rx="1" fill="none" stroke="#333" stroke-width="0.7"/><path d="M2.4 2H1.5a1 1 0 0 0-1 1V5.5a1 1 0 0 0 1 1H3.6a1 1 0 0 0 1-1V5.1" fill="none" stroke="#333" stroke-width="0.7"/></svg>
<svg class="b" style="left:608.90px;top:249.60px;" width="7" height="7" viewBox="0 0 7 7"><rect x="0.5" y="0.9" width="4" height="5" rx="1" fill="none" stroke="#a3a6b2" stroke-width="0.7"/><rect x="2.6" y="2" width="3.8" height="4.4" rx="0.9" fill="#ececf0" stroke="#a3a6b2" stroke-width="0.7"/></svg>
<svg class="b" style="left:628.60px;top:250.00px;" width="8" height="6" viewBox="0 0 8 6"><path d="M3.4 1.4a1.6 1.6 0 1 0 0 3.2M4.6 4.6a1.6 1.6 0 1 0 0-3.2M1.2 0.4L6.8 5.6" fill="none" stroke="#a3a6b2" stroke-width="0.7"/></svg>
<svg class="b" style="left:649.90px;top:249.50px;" width="6.6" height="7" viewBox="0 0 6.6 7"><path d="M0.4 1.4H6.2M2.4 1.4V0.5H4.2V1.4" fill="none" stroke="#333" stroke-width="0.65"/><path d="M1.1 1.6L1.5 6.4H5.1L5.5 1.6" fill="none" stroke="#333" stroke-width="0.7"/><path d="M2.6 2.6V5.2M4 2.6V5.2" stroke="#333" stroke-width="0.55"/></svg>
<svg class="b" style="left:670.50px;top:249.80px;" width="6.4" height="6.4" viewBox="0 0 6.4 6.4"><path d="M0.5 2V0.5H2M4.4 0.5H5.9V2M5.9 4.4V5.9H4.4M2 5.9H0.5V4.4M0.7 0.7L5.7 5.7M5.7 0.7L0.7 5.7" fill="none" stroke="#222" stroke-width="0.7"/></svg>
<span class="t" style="left:157.00px;top:267.15px;font-size:7.6px;line-height:9.5px;letter-spacing:0.019px;color:#111;">Bar count:</span>
<svg class="b" style="left:193px;top:262px" width="32" height="18"><rect x="1.85" y="2.15" width="28.10" height="14.30" rx="1.25" fill="#fff" stroke="#e5e6ea" stroke-width="0.7"/></svg>
<span class="t" style="left:210.00px;top:267.15px;font-size:7.6px;line-height:9.5px;letter-spacing:0.000px;color:#111;">6</span>
<span class="t" style="left:228.00px;top:267.15px;font-size:7.6px;line-height:9.5px;letter-spacing:-0.004px;color:#111;">Time signature:</span>
<svg class="b" style="left:281px;top:259px" width="27" height="24"><rect x="1.95" y="2.15" width="23.00" height="19.90" rx="1.25" fill="#fff" stroke="#e5e6ea" stroke-width="0.7"/></svg>
<span class="t" style="left:288.20px;top:263.75px;font-size:6px;line-height:7.5px;letter-spacing:0.000px;color:#111;">4</span>
<span class="t" style="left:288.20px;top:271.75px;font-size:6px;line-height:7.5px;letter-spacing:0.000px;color:#111;">4</span>
<div class="b" style="left:287.20px;top:270.90px;width:14.80px;height:0.40px;background:#e8e8ee;"></div>
<svg class="b" style="left:297.00px;top:266.10px;" width="4" height="2.6" viewBox="0 0 4 2.6"><path d="M0.4 0.4L2.0 2.1L3.6 0.4" fill="none" stroke="#222" stroke-width="1"/></svg>
<svg class="b" style="left:297.00px;top:274.10px;" width="4" height="2.6" viewBox="0 0 4 2.6"><path d="M0.4 0.4L2.0 2.1L3.6 0.4" fill="none" stroke="#222" stroke-width="1"/></svg>
<svg class="b" style="left:310px;top:263px" width="47" height="17"><rect x="1.65" y="1.95" width="43.80" height="13.00" rx="1.25" fill="#fff" stroke="#e5e6ea" stroke-width="0.7"/></svg>
<span class="t" style="left:316.60px;top:267.84px;font-size:6.5px;line-height:8.12px;letter-spacing:-0.040px;color:#111;transform:scaleX(0.9949);transform-origin:0 50%;">Double Beat</span>
<svg class="b" style="left:359px;top:263px" width="19" height="17"><rect x="1.65" y="1.95" width="15.30" height="13.00" rx="1.25" fill="#fff" stroke="#e5e6ea" stroke-width="0.7"/></svg>
<svg class="b" style="left:364.80px;top:267.90px;" width="7" height="7" viewBox="0 0 7 7"><circle cx="3.5" cy="3.5" r="3" fill="#c4c4c4" stroke="#666" stroke-width="0.6"/><path d="M1.4 1.9L5.6 5.1M1.4 5.1L5.6 1.9M3.5 0.6V6.4M0.6 3.5H6.4" stroke="#777" stroke-width="0.4"/></svg>
<span class="t" style="left:613.00px;top:267.15px;font-size:7.6px;line-height:9.5px;letter-spacing:-0.040px;color:#111;transform:scaleX(0.9971);transform-origin:0 50%;">Division:</span>
<svg class="b" style="left:642px;top:264px" width="41" height="15"><rect x="1.85" y="1.35" width="37.10" height="11.50" rx="1.25" fill="#fff" stroke="#e5e6ea" stroke-width="0.7"/></svg>
<span class="t" style="left:649.80px;top:268.27px;font-size:5.8px;line-height:7.25px;letter-spacing:-0.040px;color:#111;transform:scaleX(1.0021);transform-origin:0 50%;">16th</span>
<svg class="b" style="left:675.20px;top:270.10px;" width="4" height="2.6" viewBox="0 0 4 2.6"><path d="M0.4 0.4L2.0 2.1L3.6 0.4" fill="none" stroke="#222" stroke-width="1"/></svg>
<div class="b" style="left:157.50px;top:281.30px;width:524.30px;height:0.50px;background:#e9eaee;"></div>
<div class="b" style="left:157.50px;top:281.30px;width:0.50px;height:138.30px;background:#ebecef;"></div>
<div class="b" style="left:250.00px;top:281.60px;width:140.00px;height:7.80px;background:#efeff2;"></div>
<div class="b" style="left:539.33px;top:281.60px;width:142.47px;height:7.80px;background:#efeff2;"></div>
<div class="b" style="left:277.75px;top:281.60px;width:0.50px;height:7.80px;background:#e0e1e6;"></div>
<span class="t" style="left:280.70px;top:282.86px;font-size:4.7px;line-height:5.88px;letter-spacing:-0.040px;color:#111;transform:scaleX(0.9146);transform-origin:0 50%;-webkit-text-stroke:0.12px #111;">1.1.3</span>
<div class="b" style="left:315.09px;top:281.60px;width:0.50px;height:7.80px;background:#e0e1e6;"></div>
<span class="t" style="left:318.04px;top:282.86px;font-size:4.7px;line-height:5.88px;letter-spacing:-0.040px;color:#111;transform:scaleX(0.8370);transform-origin:0 50%;-webkit-text-stroke:0.12px #111;">1.2</span>
<div class="b" style="left:352.42px;top:281.60px;width:0.50px;height:7.80px;background:#e0e1e6;"></div>
<span class="t" style="left:355.37px;top:282.86px;font-size:4.7px;line-height:5.88px;letter-spacing:-0.040px;color:#111;transform:scaleX(0.9535);transform-origin:0 50%;-webkit-text-stroke:0.12px #111;">1.2.3</span>
<div class="b" style="left:389.75px;top:281.60px;width:0.50px;height:7.80px;background:#e0e1e6;"></div>
<span class="t" style="left:392.70px;top:282.86px;font-size:4.7px;line-height:5.88px;letter-spacing:-0.040px;color:#111;transform:scaleX(0.8370);transform-origin:0 50%;-webkit-text-stroke:0.12px #111;">1.3</span>
<div class="b" style="left:427.09px;top:281.60px;width:0.50px;height:7.80px;background:#e0e1e6;"></div>
<span class="t" style="left:430.04px;top:282.86px;font-size:4.7px;line-height:5.88px;letter-spacing:-0.040px;color:#111;transform:scaleX(0.9535);transform-origin:0 50%;-webkit-text-stroke:0.12px #111;">1.3.3</span>
<div class="b" style="left:464.42px;top:281.60px;width:0.50px;height:7.80px;background:#e0e1e6;"></div>
<span class="t" style="left:467.37px;top:282.86px;font-size:4.7px;line-height:5.88px;letter-spacing:-0.040px;color:#111;transform:scaleX(0.8680);transform-origin:0 50%;-webkit-text-stroke:0.12px #111;">1.4</span>
<div class="b" style="left:501.75px;top:281.60px;width:0.50px;height:7.80px;background:#e0e1e6;"></div>
<span class="t" style="left:504.70px;top:282.86px;font-size:4.7px;line-height:5.88px;letter-spacing:-0.040px;color:#111;transform:scaleX(0.9730);transform-origin:0 50%;-webkit-text-stroke:0.12px #111;">1.4.3</span>
<div class="b" style="left:539.09px;top:281.60px;width:0.50px;height:7.80px;background:#e0e1e6;"></div>
<span class="t" style="left:542.04px;top:282.86px;font-size:4.7px;line-height:5.88px;letter-spacing:0.000px;color:#111;-webkit-text-stroke:0.12px #111;">2</span>
<div class="b" style="left:576.42px;top:281.60px;width:0.50px;height:7.80px;background:#e0e1e6;"></div>
<span class="t" style="left:579.37px;top:282.86px;font-size:4.7px;line-height:5.88px;letter-spacing:-0.040px;color:#111;transform:scaleX(0.9146);transform-origin:0 50%;-webkit-text-stroke:0.12px #111;">2.1.3</span>
<div class="b" style="left:613.75px;top:281.60px;width:0.50px;height:7.80px;background:#e0e1e6;"></div>
<span class="t" style="left:616.70px;top:282.86px;font-size:4.7px;line-height:5.88px;letter-spacing:-0.040px;color:#111;transform:scaleX(0.8680);transform-origin:0 50%;-webkit-text-stroke:0.12px #111;">2.2</span>
<div class="b" style="left:651.09px;top:281.60px;width:0.50px;height:7.80px;background:#e0e1e6;"></div>
<span class="t" style="left:654.04px;top:282.86px;font-size:4.7px;line-height:5.88px;letter-spacing:-0.040px;color:#111;transform:scaleX(0.9730);transform-origin:0 50%;-webkit-text-stroke:0.12px #111;">2.2.3</span>
<div class="b" style="left:157.50px;top:289.20px;width:524.30px;height:7.80px;background:#5558d4;"></div>
<span class="t" style="left:196.80px;top:290.66px;font-size:4.7px;line-height:5.88px;letter-spacing:0.087px;color:#fff;-webkit-text-stroke:0.1px #fff;">Unfold</span>
<div class="b" style="left:250.00px;top:297.00px;width:65.34px;height:122.60px;background:#f1f2f5;"></div>
<div class="b" style="left:390.00px;top:297.00px;width:74.67px;height:122.60px;background:#f1f2f5;"></div>
<div class="b" style="left:539.34px;top:297.00px;width:74.67px;height:122.60px;background:#f1f2f5;"></div>
<div class="b" style="left:688.67px;top:297.00px;width:-6.87px;height:122.60px;background:#f1f2f5;"></div>
<div class="b" style="left:157.50px;top:353.00px;width:524.30px;height:9.33px;background:rgba(214,215,245,0.75);"></div>
<div class="b" style="left:157.50px;top:306.08px;width:524.30px;height:0.50px;background:#eeeff2;"></div>
<div class="b" style="left:157.50px;top:315.42px;width:524.30px;height:0.50px;background:#eeeff2;"></div>
<div class="b" style="left:157.50px;top:324.75px;width:524.30px;height:0.50px;background:#eeeff2;"></div>
<div class="b" style="left:157.50px;top:334.08px;width:524.30px;height:0.50px;background:#eeeff2;"></div>
<div class="b" style="left:157.50px;top:343.42px;width:524.30px;height:0.50px;background:#eeeff2;"></div>
<div class="b" style="left:157.50px;top:352.75px;width:524.30px;height:0.50px;background:#eeeff2;"></div>
<div class="b" style="left:157.50px;top:362.08px;width:524.30px;height:0.50px;background:#eeeff2;"></div>
<div class="b" style="left:157.50px;top:371.42px;width:524.30px;height:0.50px;background:#eeeff2;"></div>
<div class="b" style="left:157.50px;top:380.75px;width:524.30px;height:0.50px;background:#eeeff2;"></div>
<div class="b" style="left:157.50px;top:390.08px;width:524.30px;height:0.50px;background:#bfc0c6;"></div>
<div class="b" style="left:259.09px;top:297.00px;width:0.50px;height:122.60px;background:#e8e9ed;"></div>
<div class="b" style="left:277.75px;top:297.00px;width:0.50px;height:122.60px;background:#e8e9ed;"></div>
<div class="b" style="left:296.42px;top:297.00px;width:0.50px;height:122.60px;background:#e8e9ed;"></div>
<div class="b" style="left:315.09px;top:297.00px;width:0.50px;height:122.60px;background:#e8e9ed;"></div>
<div class="b" style="left:333.75px;top:297.00px;width:0.50px;height:122.60px;background:#e8e9ed;"></div>
<div class="b" style="left:352.42px;top:297.00px;width:0.50px;height:122.60px;background:#e8e9ed;"></div>
<div class="b" style="left:371.09px;top:297.00px;width:0.50px;height:122.60px;background:#e8e9ed;"></div>
<div class="b" style="left:389.75px;top:297.00px;width:0.50px;height:122.60px;background:#e8e9ed;"></div>
<div class="b" style="left:408.42px;top:297.00px;width:0.50px;height:122.60px;background:#e8e9ed;"></div>
<div class="b" style="left:427.09px;top:297.00px;width:0.50px;height:122.60px;background:#e8e9ed;"></div>
<div class="b" style="left:445.75px;top:297.00px;width:0.50px;height:122.60px;background:#e8e9ed;"></div>
<div class="b" style="left:464.42px;top:297.00px;width:0.50px;height:122.60px;background:#e8e9ed;"></div>
<div class="b" style="left:483.09px;top:297.00px;width:0.50px;height:122.60px;background:#e8e9ed;"></div>
<div class="b" style="left:501.75px;top:297.00px;width:0.50px;height:122.60px;background:#e8e9ed;"></div>
<div class="b" style="left:520.42px;top:297.00px;width:0.50px;height:122.60px;background:#e8e9ed;"></div>
<div class="b" style="left:539.09px;top:297.00px;width:0.50px;height:122.60px;background:#e8e9ed;"></div>
<div class="b" style="left:557.75px;top:297.00px;width:0.50px;height:122.60px;background:#e8e9ed;"></div>
<div class="b" style="left:576.42px;top:297.00px;width:0.50px;height:122.60px;background:#e8e9ed;"></div>
<div class="b" style="left:595.09px;top:297.00px;width:0.50px;height:122.60px;background:#e8e9ed;"></div>
<div class="b" style="left:613.75px;top:297.00px;width:0.50px;height:122.60px;background:#e8e9ed;"></div>
<div class="b" style="left:632.42px;top:297.00px;width:0.50px;height:122.60px;background:#e8e9ed;"></div>
<div class="b" style="left:651.09px;top:297.00px;width:0.50px;height:122.60px;background:#e8e9ed;"></div>
<div class="b" style="left:669.75px;top:297.00px;width:0.50px;height:122.60px;background:#e8e9ed;"></div>
<div class="b" style="left:238.60px;top:297.00px;width:11.40px;height:93.33px;background:#d1d4dc;"></div>
<div class="b" style="left:238.60px;top:306.08px;width:11.40px;height:0.50px;background:#d9dce3;"></div>
<div class="b" style="left:238.60px;top:315.42px;width:11.40px;height:0.50px;background:#d9dce3;"></div>
<div class="b" style="left:238.60px;top:324.75px;width:11.40px;height:0.50px;background:#d9dce3;"></div>
<div class="b" style="left:238.60px;top:334.08px;width:11.40px;height:0.50px;background:#d9dce3;"></div>
<div class="b" style="left:238.60px;top:343.42px;width:11.40px;height:0.50px;background:#d9dce3;"></div>
<div class="b" style="left:238.60px;top:352.75px;width:11.40px;height:0.50px;background:#d9dce3;"></div>
<div class="b" style="left:238.60px;top:362.08px;width:11.40px;height:0.50px;background:#d9dce3;"></div>
<div class="b" style="left:238.60px;top:371.42px;width:11.40px;height:0.50px;background:#d9dce3;"></div>
<div class="b" style="left:238.60px;top:380.75px;width:11.40px;height:0.50px;background:#d9dce3;"></div>
<span class="t" style="left:159.60px;top:297.71px;font-size:7.3px;line-height:9.12px;letter-spacing:-0.040px;color:#111;transform:scaleX(0.9149);transform-origin:0 50%;-webkit-text-stroke:0.1px #111;">104. Shekere Side to Side</span>
<span class="t" style="left:159.60px;top:307.04px;font-size:7.3px;line-height:9.12px;letter-spacing:-0.040px;color:#111;transform:scaleX(0.8837);transform-origin:0 50%;-webkit-text-stroke:0.1px #111;">101. Shekere Up</span>
<span class="t" style="left:159.60px;top:316.37px;font-size:7.3px;line-height:9.12px;letter-spacing:-0.040px;color:#111;transform:scaleX(0.9303);transform-origin:0 50%;-webkit-text-stroke:0.1px #111;">99. Maraca's (R)</span>
<span class="t" style="left:159.60px;top:325.71px;font-size:7.3px;line-height:9.12px;letter-spacing:-0.040px;color:#111;transform:scaleX(0.9566);transform-origin:0 50%;-webkit-text-stroke:0.1px #111;">44. Foot Hi-Hat</span>
<span class="t" style="left:159.60px;top:335.04px;font-size:7.3px;line-height:9.12px;letter-spacing:-0.040px;color:#111;transform:scaleX(0.9350);transform-origin:0 50%;-webkit-text-stroke:0.1px #111;">36. Kick Drum</span>
<span class="t" style="left:159.60px;top:344.37px;font-size:7.3px;line-height:9.12px;letter-spacing:-0.040px;color:#111;transform:scaleX(0.9249);transform-origin:0 50%;-webkit-text-stroke:0.1px #111;">32. Bongo Low- Open</span>
<span class="t" style="left:159.60px;top:353.71px;font-size:7.3px;line-height:9.12px;letter-spacing:-0.040px;color:#111;transform:scaleX(0.9552);transform-origin:0 50%;-webkit-text-stroke:0.1px #111;">25. Bongo High- Muffled</span>
<span class="t" style="left:159.60px;top:363.04px;font-size:7.3px;line-height:9.12px;letter-spacing:-0.040px;color:#111;transform:scaleX(0.8862);transform-origin:0 50%;-webkit-text-stroke:0.1px #111;">7. Conga Bass</span>
<span class="t" style="left:159.60px;top:372.37px;font-size:7.3px;line-height:9.12px;letter-spacing:-0.040px;color:#111;transform:scaleX(0.9173);transform-origin:0 50%;-webkit-text-stroke:0.1px #111;">4. Conga- Rumba Slap</span>
<span class="t" style="left:159.60px;top:381.71px;font-size:7.3px;line-height:9.12px;letter-spacing:-0.040px;color:#111;transform:scaleX(0.9226);transform-origin:0 50%;-webkit-text-stroke:0.1px #111;">3. Conga- Closed Slap</span>
<svg class="b" style="left:250.00px;top:297.00px;" width="431.79999999999995" height="93.333" viewBox="0 0 431.79999999999995 93.333"><defs><linearGradient id="ng0" x1="0" y1="0" x2="0" y2="1"><stop offset="0.35" stop-color="#fb8a1e"/><stop offset="1" stop-color="#fc9a3c"/></linearGradient><linearGradient id="ng1" x1="0" y1="0" x2="0" y2="1"><stop offset="0.35" stop-color="#f68d3c"/><stop offset="1" stop-color="#f89c57"/></linearGradient><linearGradient id="ng2" x1="0" y1="0" x2="0" y2="1"><stop offset="0.35" stop-color="#f59557"/><stop offset="1" stop-color="#f7a36d"/></linearGradient></defs><rect x="290.14" y="19.22" width="18.67" height="8.48" fill="url(#ng1)" stroke="#150b03" stroke-width="0.95"/><rect x="308.80" y="19.22" width="18.67" height="8.48" fill="url(#ng1)" stroke="#150b03" stroke-width="0.95"/><rect x="327.47" y="19.22" width="18.67" height="8.48" fill="url(#ng1)" stroke="#150b03" stroke-width="0.95"/><rect x="346.14" y="19.22" width="18.67" height="8.48" fill="url(#ng1)" stroke="#150b03" stroke-width="0.95"/><rect x="364.80" y="19.22" width="18.67" height="8.48" fill="url(#ng1)" stroke="#150b03" stroke-width="0.95"/><rect x="383.47" y="19.22" width="18.67" height="8.48" fill="url(#ng1)" stroke="#150b03" stroke-width="0.95"/><rect x="402.14" y="19.22" width="18.67" height="8.48" fill="url(#ng1)" stroke="#150b03" stroke-width="0.95"/><rect x="420.80" y="19.22" width="13.00" height="8.48" fill="url(#ng1)" stroke="#150b03" stroke-width="0.95"/><rect x="103.47" y="56.55" width="18.67" height="8.48" fill="url(#ng1)" stroke="#150b03" stroke-width="0.95"/><rect x="122.14" y="56.55" width="18.67" height="8.48" fill="url(#ng1)" stroke="#150b03" stroke-width="0.95"/><rect x="252.80" y="56.55" width="18.67" height="8.48" fill="url(#ng1)" stroke="#150b03" stroke-width="0.95"/><rect x="271.47" y="56.55" width="18.67" height="8.48" fill="url(#ng1)" stroke="#150b03" stroke-width="0.95"/><rect x="402.14" y="56.55" width="18.67" height="8.48" fill="url(#ng1)" stroke="#150b03" stroke-width="0.95"/><rect x="420.80" y="56.55" width="13.00" height="8.48" fill="url(#ng1)" stroke="#150b03" stroke-width="0.95"/><rect x="-2.00" y="65.88" width="12.14" height="8.48" fill="url(#ng0)" stroke="#150b03" stroke-width="0.95"/><rect x="122.14" y="65.88" width="18.67" height="8.48" fill="url(#ng0)" stroke="#150b03" stroke-width="0.95"/><rect x="159.47" y="65.88" width="18.67" height="8.48" fill="url(#ng0)" stroke="#150b03" stroke-width="0.95"/><rect x="290.14" y="65.88" width="18.67" height="8.48" fill="url(#ng0)" stroke="#150b03" stroke-width="0.95"/><rect x="420.80" y="65.88" width="13.00" height="8.48" fill="url(#ng0)" stroke="#150b03" stroke-width="0.95"/><rect x="28.80" y="75.22" width="18.67" height="8.48" fill="url(#ng1)" stroke="#150b03" stroke-width="0.95"/><rect x="103.47" y="75.22" width="18.67" height="8.48" fill="url(#ng1)" stroke="#150b03" stroke-width="0.95"/><rect x="178.14" y="75.22" width="18.67" height="8.48" fill="url(#ng1)" stroke="#150b03" stroke-width="0.95"/><rect x="196.80" y="75.22" width="18.67" height="8.48" fill="url(#ng1)" stroke="#150b03" stroke-width="0.95"/><rect x="252.80" y="75.22" width="18.67" height="8.48" fill="url(#ng1)" stroke="#150b03" stroke-width="0.95"/><rect x="327.47" y="75.22" width="18.67" height="8.48" fill="url(#ng1)" stroke="#150b03" stroke-width="0.95"/><rect x="402.14" y="75.22" width="18.67" height="8.48" fill="url(#ng1)" stroke="#150b03" stroke-width="0.95"/><rect x="66.14" y="84.55" width="18.67" height="8.48" fill="url(#ng2)" stroke="#150b03" stroke-width="0.95"/><rect x="84.80" y="84.55" width="18.67" height="8.48" fill="url(#ng2)" stroke="#150b03" stroke-width="0.95"/><rect x="215.47" y="84.55" width="18.67" height="8.48" fill="url(#ng2)" stroke="#150b03" stroke-width="0.95"/><rect x="234.14" y="84.55" width="18.67" height="8.48" fill="url(#ng2)" stroke="#150b03" stroke-width="0.95"/><rect x="364.80" y="84.55" width="18.67" height="8.48" fill="url(#ng2)" stroke="#150b03" stroke-width="0.95"/><rect x="383.47" y="84.55" width="18.67" height="8.48" fill="url(#ng2)" stroke="#150b03" stroke-width="0.95"/></svg>
<svg class="b" style="left:250.00px;top:388.00px;" width="431.79999999999995" height="34" viewBox="0 0 431.79999999999995 34"><path d="M0.00 4.30H8.34" stroke="#383838" stroke-width="0.75"/><path d="M28.00 17.00H45.67" stroke="#383838" stroke-width="0.75"/><circle cx="29.60" cy="17.00" r="1.35" fill="#fff" stroke="#2a2a2a" stroke-width="0.65"/><path d="M65.34 20.30H83.00" stroke="#383838" stroke-width="0.75"/><circle cx="66.94" cy="20.30" r="1.35" fill="#fff" stroke="#2a2a2a" stroke-width="0.65"/><path d="M84.00 20.30H101.67" stroke="#383838" stroke-width="0.75"/><circle cx="85.60" cy="20.30" r="1.35" fill="#fff" stroke="#2a2a2a" stroke-width="0.65"/><path d="M102.67 13.00H120.34" stroke="#383838" stroke-width="0.75"/><circle cx="104.27" cy="13.00" r="1.35" fill="#fff" stroke="#2a2a2a" stroke-width="0.65"/><path d="M102.67 17.00H120.34" stroke="#383838" stroke-width="0.75"/><circle cx="104.27" cy="17.00" r="1.35" fill="#fff" stroke="#2a2a2a" stroke-width="0.65"/><path d="M121.34 4.30H139.00" stroke="#383838" stroke-width="0.75"/><circle cx="122.94" cy="4.30" r="1.35" fill="#fff" stroke="#2a2a2a" stroke-width="0.65"/><path d="M121.34 13.00H139.00" stroke="#383838" stroke-width="0.75"/><circle cx="122.94" cy="13.00" r="1.35" fill="#fff" stroke="#2a2a2a" stroke-width="0.65"/><path d="M158.67 4.30H176.34" stroke="#383838" stroke-width="0.75"/><circle cx="160.27" cy="4.30" r="1.35" fill="#fff" stroke="#2a2a2a" stroke-width="0.65"/><path d="M177.34 17.00H195.00" stroke="#383838" stroke-width="0.75"/><circle cx="178.94" cy="17.00" r="1.35" fill="#fff" stroke="#2a2a2a" stroke-width="0.65"/><path d="M196.00 17.00H213.67" stroke="#383838" stroke-width="0.75"/><circle cx="197.60" cy="17.00" r="1.35" fill="#fff" stroke="#2a2a2a" stroke-width="0.65"/><path d="M214.67 20.30H232.34" stroke="#383838" stroke-width="0.75"/><circle cx="216.27" cy="20.30" r="1.35" fill="#fff" stroke="#2a2a2a" stroke-width="0.65"/><path d="M233.34 20.30H251.00" stroke="#383838" stroke-width="0.75"/><circle cx="234.94" cy="20.30" r="1.35" fill="#fff" stroke="#2a2a2a" stroke-width="0.65"/><path d="M252.00 13.00H269.67" stroke="#383838" stroke-width="0.75"/><circle cx="253.60" cy="13.00" r="1.35" fill="#fff" stroke="#2a2a2a" stroke-width="0.65"/><path d="M252.00 17.00H269.67" stroke="#383838" stroke-width="0.75"/><circle cx="253.60" cy="17.00" r="1.35" fill="#fff" stroke="#2a2a2a" stroke-width="0.65"/><path d="M270.67 13.00H288.34" stroke="#383838" stroke-width="0.75"/><circle cx="272.27" cy="13.00" r="1.35" fill="#fff" stroke="#2a2a2a" stroke-width="0.65"/><path d="M289.34 4.30H307.00" stroke="#383838" stroke-width="0.75"/><circle cx="290.94" cy="4.30" r="1.35" fill="#fff" stroke="#2a2a2a" stroke-width="0.65"/><path d="M326.67 17.00H344.34" stroke="#383838" stroke-width="0.75"/><circle cx="328.27" cy="17.00" r="1.35" fill="#fff" stroke="#2a2a2a" stroke-width="0.65"/><path d="M364.00 20.30H381.67" stroke="#383838" stroke-width="0.75"/><circle cx="365.60" cy="20.30" r="1.35" fill="#fff" stroke="#2a2a2a" stroke-width="0.65"/><path d="M382.67 20.30H400.34" stroke="#383838" stroke-width="0.75"/><circle cx="384.27" cy="20.30" r="1.35" fill="#fff" stroke="#2a2a2a" stroke-width="0.65"/><path d="M401.34 13.00H419.00" stroke="#383838" stroke-width="0.75"/><circle cx="402.94" cy="13.00" r="1.35" fill="#fff" stroke="#2a2a2a" stroke-width="0.65"/><path d="M401.34 17.00H419.00" stroke="#383838" stroke-width="0.75"/><circle cx="402.94" cy="17.00" r="1.35" fill="#fff" stroke="#2a2a2a" stroke-width="0.65"/><path d="M420.00 4.30H430.80" stroke="#383838" stroke-width="0.75"/><circle cx="421.60" cy="4.30" r="1.35" fill="#fff" stroke="#2a2a2a" stroke-width="0.65"/><path d="M420.00 13.00H430.80" stroke="#383838" stroke-width="0.75"/><circle cx="421.60" cy="13.00" r="1.35" fill="#fff" stroke="#2a2a2a" stroke-width="0.65"/><path d="M289.34 17.00H307.00" stroke="#383838" stroke-width="0.75"/><circle cx="290.94" cy="17.00" r="1.35" fill="#fff" stroke="#2a2a2a" stroke-width="0.65"/><path d="M308.00 17.00H325.67" stroke="#383838" stroke-width="0.75"/><circle cx="309.60" cy="17.00" r="1.35" fill="#fff" stroke="#2a2a2a" stroke-width="0.65"/><path d="M326.67 17.00H344.34" stroke="#383838" stroke-width="0.75"/><circle cx="328.27" cy="17.00" r="1.35" fill="#fff" stroke="#2a2a2a" stroke-width="0.65"/><path d="M345.34 17.00H363.00" stroke="#383838" stroke-width="0.75"/><circle cx="346.94" cy="17.00" r="1.35" fill="#fff" stroke="#2a2a2a" stroke-width="0.65"/><path d="M364.00 17.00H381.67" stroke="#383838" stroke-width="0.75"/><circle cx="365.60" cy="17.00" r="1.35" fill="#fff" stroke="#2a2a2a" stroke-width="0.65"/><path d="M382.67 17.00H400.34" stroke="#383838" stroke-width="0.75"/><circle cx="384.27" cy="17.00" r="1.35" fill="#fff" stroke="#2a2a2a" stroke-width="0.65"/><path d="M401.34 17.00H419.00" stroke="#383838" stroke-width="0.75"/><circle cx="402.94" cy="17.00" r="1.35" fill="#fff" stroke="#2a2a2a" stroke-width="0.65"/><path d="M420.00 17.00H430.80" stroke="#383838" stroke-width="0.75"/><circle cx="421.60" cy="17.00" r="1.35" fill="#fff" stroke="#2a2a2a" stroke-width="0.65"/></svg>
<span class="t" style="left:159.50px;top:390.94px;font-size:7.3px;line-height:9.12px;letter-spacing:-0.040px;color:#111;transform:scaleX(0.9688);transform-origin:0 50%;">Velocity</span>
<svg class="b" style="left:159px;top:405px" width="20" height="16"><rect x="1.55" y="2.15" width="17.10" height="12.30" rx="1.25" fill="#fff" stroke="#e5e6ea" stroke-width="0.7"/></svg>
<span class="t" style="left:164.80px;top:409.07px;font-size:7.4px;line-height:9.25px;letter-spacing:-0.040px;color:#111;transform:scaleX(0.8970);transform-origin:0 50%;">100</span>
<div class="b" style="left:157.50px;top:419.80px;width:92.50px;height:0.50px;background:#e6e7ec;"></div>
<div class="b" style="left:253.80px;top:421.40px;width:100.60px;height:2.60px;background:#8b8b8b;border-radius:1.3px;"></div>
</section>
<nav aria-label="Browser window">
<div class="b" style="left:0.00px;top:0.00px;width:690.00px;height:20.10px;background:#5558d4;"></div>
<div class="b" style="left:0.00px;top:19.20px;width:690.00px;height:0.90px;background:#4346cc;"></div>
<div class="b" style="left:0.00px;top:0.00px;width:90.00px;height:1.00px;background:#4a4a4a;"></div>
<div class="b" style="left:90.00px;top:0.00px;width:187.00px;height:1.00px;background:#c4c4cc;"></div>
<div class="b" style="left:277.00px;top:0.00px;width:413.00px;height:1.00px;background:#3f3f52;"></div>
<div class="b" style="left:5.00px;top:7.20px;width:7.00px;height:7.00px;background:#f4505f;border-radius:4px;"></div>
<div class="b" style="left:15.60px;top:7.20px;width:7.00px;height:7.00px;background:#fbbb1e;border-radius:4px;"></div>
<div class="b" style="left:26.40px;top:7.20px;width:7.00px;height:7.00px;background:#30c645;border-radius:4px;"></div>
<svg class="b" style="left:38.00px;top:2.00px;" width="16" height="16" viewBox="0 0 16 16"><circle cx="7.9" cy="7.9" r="6.2" fill="rgba(255,255,255,0.10)"/><circle cx="7.9" cy="7.9" r="5" fill="none" stroke="rgba(255,255,255,0.10)" stroke-width="1.2"/><path d="M9.6 1.9A6.3 6.3 0 0 1 14 6.4" fill="none" stroke="rgba(255,255,255,0.55)" stroke-width="0.7"/><path d="M5 9.6V7A2.9 2.4 0 0 1 10.8 7V9.6Z" fill="#f2f2ff"/><path d="M5.8 7.3H10M6.6 8.6H9.2" stroke="#6467da" stroke-width="0.7"/><rect x="7.5" y="6.9" width="0.8" height="2.2" fill="#6467da"/></svg>
<svg class="b" style="left:53px;top:2px" width="86" height="17"><rect x="1.80" y="1.40" width="82.80" height="13.70" rx="6.85" fill="#fff"/></svg>
<svg class="b" style="left:57.60px;top:5.80px;" width="8.2" height="8.2" viewBox="0 0 8.2 8.2"><circle cx="4.1" cy="4.1" r="3.8" fill="#6a6de0"/><path d="M2 5.6V3.8A2.1 1.8 0 0 1 6.2 3.8V5.6Z" fill="#fff"/><path d="M2.6 4H5.6M3.2 4.9H5" stroke="#6a6de0" stroke-width="0.5"/><rect x="3.8" y="3.6" width="0.6" height="1.7" fill="#6a6de0"/></svg>
<span class="t" style="left:68.00px;top:6.47px;font-size:7.4px;line-height:9.25px;letter-spacing:-0.040px;color:#1a1a1a;transform:scaleX(0.8067);transform-origin:0 50%;-webkit-mask-image:linear-gradient(90deg,#000 88%,transparent 104%);mask-image:linear-gradient(90deg,#000 88%,transparent 104%);-webkit-text-stroke:0.1px #1a1a1a;">Sympathy for the Devil wi</span>
<svg class="b" style="left:144.50px;top:7.50px;" width="6" height="6" viewBox="0 0 6 6"><path d="M3 0.3V5.7M0.3 3H5.7" stroke="#fff" stroke-width="0.9"/></svg>
<div class="b" style="left:674.40px;top:5.80px;width:9.80px;height:8.80px;background:#7b7ee0;box-shadow:inset 0 0 0 0.7px #a9abec;border-radius:1.8px;"></div>
<svg class="b" style="left:676.50px;top:8.40px;" width="5.6" height="4.2" viewBox="0 0 5.6 4.2"><path d="M0.6 0.8L2.8 3.1L5 0.8" fill="none" stroke="#fff" stroke-width="1.1"/></svg>
<div class="b" style="left:0.00px;top:20.00px;width:690.00px;height:19.20px;background:#f7f7f7;"></div>
<div class="b" style="left:0.00px;top:38.70px;width:690.00px;height:0.70px;background:#e8e8e8;"></div>
<svg class="b" style="left:3.50px;top:25.30px;" width="9" height="8" viewBox="0 0 9 8"><rect x="0.5" y="0.5" width="8" height="7" rx="1.6" fill="none" stroke="#555" stroke-width="0.8"/><path d="M3.3 0.5V7.5" stroke="#555" stroke-width="0.8"/></svg>
<svg class="b" style="left:36.00px;top:26.10px;" width="9" height="6.4" viewBox="0 0 9 6.4"><path d="M8.6 3.2H0.8M3.4 0.5L0.7 3.2L3.4 5.9" fill="none" stroke="#444" stroke-width="0.8"/></svg>
<svg class="b" style="left:54.00px;top:26.10px;" width="9" height="6.4" viewBox="0 0 9 6.4"><path d="M0.4 3.2H8.2M5.6 0.5L8.3 3.2L5.6 5.9" fill="none" stroke="#9a9a9a" stroke-width="0.8"/></svg>
<svg class="b" style="left:71.30px;top:25.20px;" width="8" height="8" viewBox="0 0 8 8"><path d="M1.2 4.6A2.9 2.9 0 0 1 6 1.9M6.8 3.4A2.9 2.9 0 0 1 2 6.1" fill="none" stroke="#333" stroke-width="0.85"/><path d="M6.3 0.4V2.2H4.5M1.7 7.6V5.8H3.5" fill="none" stroke="#333" stroke-width="0.8"/></svg>
<svg class="b" style="left:85px;top:21px" width="403" height="17"><rect x="1.30" y="2.00" width="399.90" height="13.00" rx="6.50" fill="#fff" stroke="#ececec" stroke-width="0.6"/></svg>
<svg class="b" style="left:89.40px;top:25.80px;" width="6.4" height="7" viewBox="0 0 6.4 7"><path d="M3.2 0.5L5.9 1.4V3.6C5.9 5.2 4.7 6.2 3.2 6.6C1.7 6.2 0.5 5.2 0.5 3.6V1.4Z" fill="none" stroke="#555" stroke-width="0.7"/><path d="M3.2 2L4.6 2.5V3.6C4.6 4.4 4 5 3.2 5.2C2.4 5 1.8 4.4 1.8 3.6V2.5Z" fill="#777"/></svg>
<svg class="b" style="left:101.80px;top:25.60px;" width="5.6" height="7.2" viewBox="0 0 5.6 7.2"><rect x="0.5" y="3" width="4.6" height="3.7" rx="0.7" fill="none" stroke="#444" stroke-width="0.8"/><path d="M1.4 3V2.1a1.4 1.4 0 0 1 2.8 0V3" fill="none" stroke="#444" stroke-width="0.8"/></svg>
<span class="t" style="left:111.30px;top:25.82px;font-size:7px;line-height:8.75px;letter-spacing:-0.040px;color:#9a9a9a;transform:scaleX(0.8649);transform-origin:0 50%;">bbmo.</span>
<span class="t" style="left:128.00px;top:25.82px;font-size:7px;line-height:8.75px;letter-spacing:-0.040px;color:#111;transform:scaleX(0.9204);transform-origin:0 50%;-webkit-text-stroke:0.15px #111;">singularsound.com</span>
<span class="t" style="left:181.50px;top:25.82px;font-size:7px;line-height:8.75px;letter-spacing:-0.040px;color:#9a9a9a;transform:scaleX(0.8721);transform-origin:0 50%;">/songs/BF368655/FFAAF380.BBS</span>
<svg class="b" style="left:477.60px;top:25.90px;" width="4.6" height="6.6" viewBox="0 0 4.6 6.6"><path d="M0.6 0.5H4V6L2.3 4.6L0.6 6Z" fill="none" stroke="#444" stroke-width="0.8"/></svg>
<svg class="b" style="left:488px;top:21px" width="100" height="17"><rect x="2.10" y="2.00" width="96.20" height="13.00" rx="6.50" fill="#fff" stroke="#ececec" stroke-width="0.6"/></svg>
<svg class="b" style="left:492.80px;top:26.20px;" width="6.4" height="6.4" viewBox="0 0 6.4 6.4"><circle cx="2.5" cy="2.5" r="1.9" fill="#dfe9ff" stroke="#3a5fd8" stroke-width="0.9"/><path d="M4 4L5.9 5.9" stroke="#3a5fd8" stroke-width="1.1"/></svg>
<span class="t" style="left:502.60px;top:25.99px;font-size:6.9px;line-height:8.62px;letter-spacing:-0.040px;color:#8a8a8a;transform:scaleX(0.8937);transform-origin:0 50%;">Search Startpage</span>
<div class="b" style="left:607.00px;top:24.20px;width:10.40px;height:10.40px;background:#1c1c1c;border-radius:2.4px;"></div>
<svg class="b" style="left:608.40px;top:25.40px;" width="7.6" height="8" viewBox="0 0 7.6 8"><rect x="0.5" y="1.8" width="6.6" height="5.6" rx="1" fill="none" stroke="#e8e8e8" stroke-width="0.8"/><path d="M1.6 1.8a2.2 1.6 0 0 1 4.4 0" fill="none" stroke="#e8e8e8" stroke-width="0.8"/><path d="M3.1 3.2V6.4M4.5 3.2V6.4" stroke="#e8e8e8" stroke-width="0.7"/></svg>
<span class="t" style="left:627.20px;top:24.98px;font-size:8.2px;line-height:10.25px;letter-spacing:0.000px;color:#e0383e;font-weight:700;">8</span>
<div class="b" style="left:631.30px;top:23.20px;width:6.50px;height:6.50px;background:#37b34a;border-radius:3.3px;"></div>
<span class="t" style="left:633.20px;top:23.62px;font-size:4.6px;line-height:5.75px;letter-spacing:0.000px;color:#fff;font-weight:700;">0</span>
<svg class="b" style="left:642.60px;top:26.00px;" width="7.6" height="7" viewBox="0 0 7.6 7"><path d="M0.4 0.8H1.6L2.6 4.4H6.2L7 1.8H2" fill="none" stroke="#b9b9b9" stroke-width="0.7"/><circle cx="3.1" cy="5.8" r="0.6" fill="#b9b9b9"/><circle cx="5.7" cy="5.8" r="0.6" fill="#b9b9b9"/></svg>
<div class="b" style="left:656.00px;top:25.70px;width:13.40px;height:7.40px;box-shadow:inset 0 0 0 1px #3a3a3a;border-radius:1.6px;"></div>
<span class="t" style="left:658.50px;top:26.44px;font-size:4.9px;line-height:6.12px;letter-spacing:-0.040px;color:#222;font-weight:700;transform:scaleX(0.8415);transform-origin:0 50%;">VPN</span>
<div class="b" style="left:674.00px;top:23.40px;width:11.60px;height:11.60px;background:#6f6f6f;border-radius:6px;"></div>
<svg class="b" style="left:674.10px;top:23.50px;" width="11.4" height="11.4" viewBox="0 0 11.4 11.4"><defs><clipPath id="av"><circle cx="5.7" cy="5.7" r="4.6"/></clipPath></defs><circle cx="5.7" cy="5.7" r="4.6" fill="#ededed"/><g clip-path="url(#av)" fill="#6d6d6d"><circle cx="5.7" cy="4.5" r="2.1"/><ellipse cx="5.7" cy="10.3" rx="4.1" ry="3.4"/></g></svg>
<div class="b" style="left:0.00px;top:39.40px;width:690.00px;height:19.20px;background:#f5f5f5;"></div>
<div class="b" style="left:0.00px;top:58.10px;width:690.00px;height:0.70px;background:#e6e6e6;"></div>
<span class="t" style="left:3.60px;top:45.09px;font-size:6.9px;line-height:8.62px;letter-spacing:-0.040px;color:#2a2a2a;transform:scaleX(0.9038);transform-origin:0 50%;">Enjoying Vivaldi? Make it your default browser.</span>
<svg class="b" style="left:133px;top:41px" width="82" height="16"><rect x="1.45" y="1.85" width="78.90" height="12.30" rx="6.15" fill="#f9fbfe" stroke="#4f93ee" stroke-width="0.9"/></svg>
<span class="t" style="left:142.60px;top:45.09px;font-size:6.9px;line-height:8.62px;letter-spacing:-0.040px;color:#1b6fd8;transform:scaleX(0.8904);transform-origin:0 50%;-webkit-text-stroke:0.12px #1b6fd8;">Set as Default Browser</span>
<div class="b" style="left:610.20px;top:45.00px;width:7.40px;height:7.20px;background:#2f7bf0;border-radius:1.4px;"></div>
<svg class="b" style="left:611.30px;top:46.30px;" width="5.2" height="4.6" viewBox="0 0 5.2 4.6"><path d="M0.7 2.4L2 3.7L4.5 0.8" fill="none" stroke="#fff" stroke-width="0.9"/></svg>
<span class="t" style="left:622.00px;top:44.89px;font-size:6.9px;line-height:8.62px;letter-spacing:-0.040px;color:#2a2a2a;transform:scaleX(0.8965);transform-origin:0 50%;">Check on Startup</span>
<svg class="b" style="left:676.80px;top:46.20px;" width="4.8" height="4.8" viewBox="0 0 4.8 4.8"><path d="M0.6 0.6L4.2 4.2M4.2 0.6L0.6 4.2" stroke="#333" stroke-width="0.8"/></svg>
<div class="b" style="left:4.10px;top:13.00px;width:57.60px;height:8.90px;background:#f4f4f4;box-shadow:inset 0 0 0 0.6px #cfcfcf;border-radius:1.2px;filter:drop-shadow(0 0.5px 0.8px rgba(0,0,0,0.25));"></div>
<span class="t" style="left:7.40px;top:13.91px;font-size:5.9px;line-height:7.38px;letter-spacing:-0.040px;color:#333;transform:scaleX(0.9608);transform-origin:0 50%;">Bongo High- Muffled</span>
<svg class="b" style="left:0.00px;top:0.00px;" width="5" height="5" viewBox="0 0 5 5"><path d="M0 0H4.4A4.4 4.4 0 0 0 0 4.6Z" fill="#cfcfcf"/></svg>
<div class="b" style="left:688.60px;top:0.00px;width:1.40px;height:280.00px;background:#2a2f25;"></div>
<div class="b" style="left:688.60px;top:280.00px;width:1.40px;height:160.00px;background:#a2a2a2;background-image:linear-gradient(180deg,#9a9a9a,#c2c2c2);"></div>
<svg class="b" style="left:682.00px;top:0.00px;" width="8" height="8" viewBox="0 0 8 8"><path d="M8 0V8H6.6V6.4A5.2 5.2 0 0 0 1.4 1.3H0V0Z" fill="#2c3226"/></svg>
</nav>
</body>
</html>
